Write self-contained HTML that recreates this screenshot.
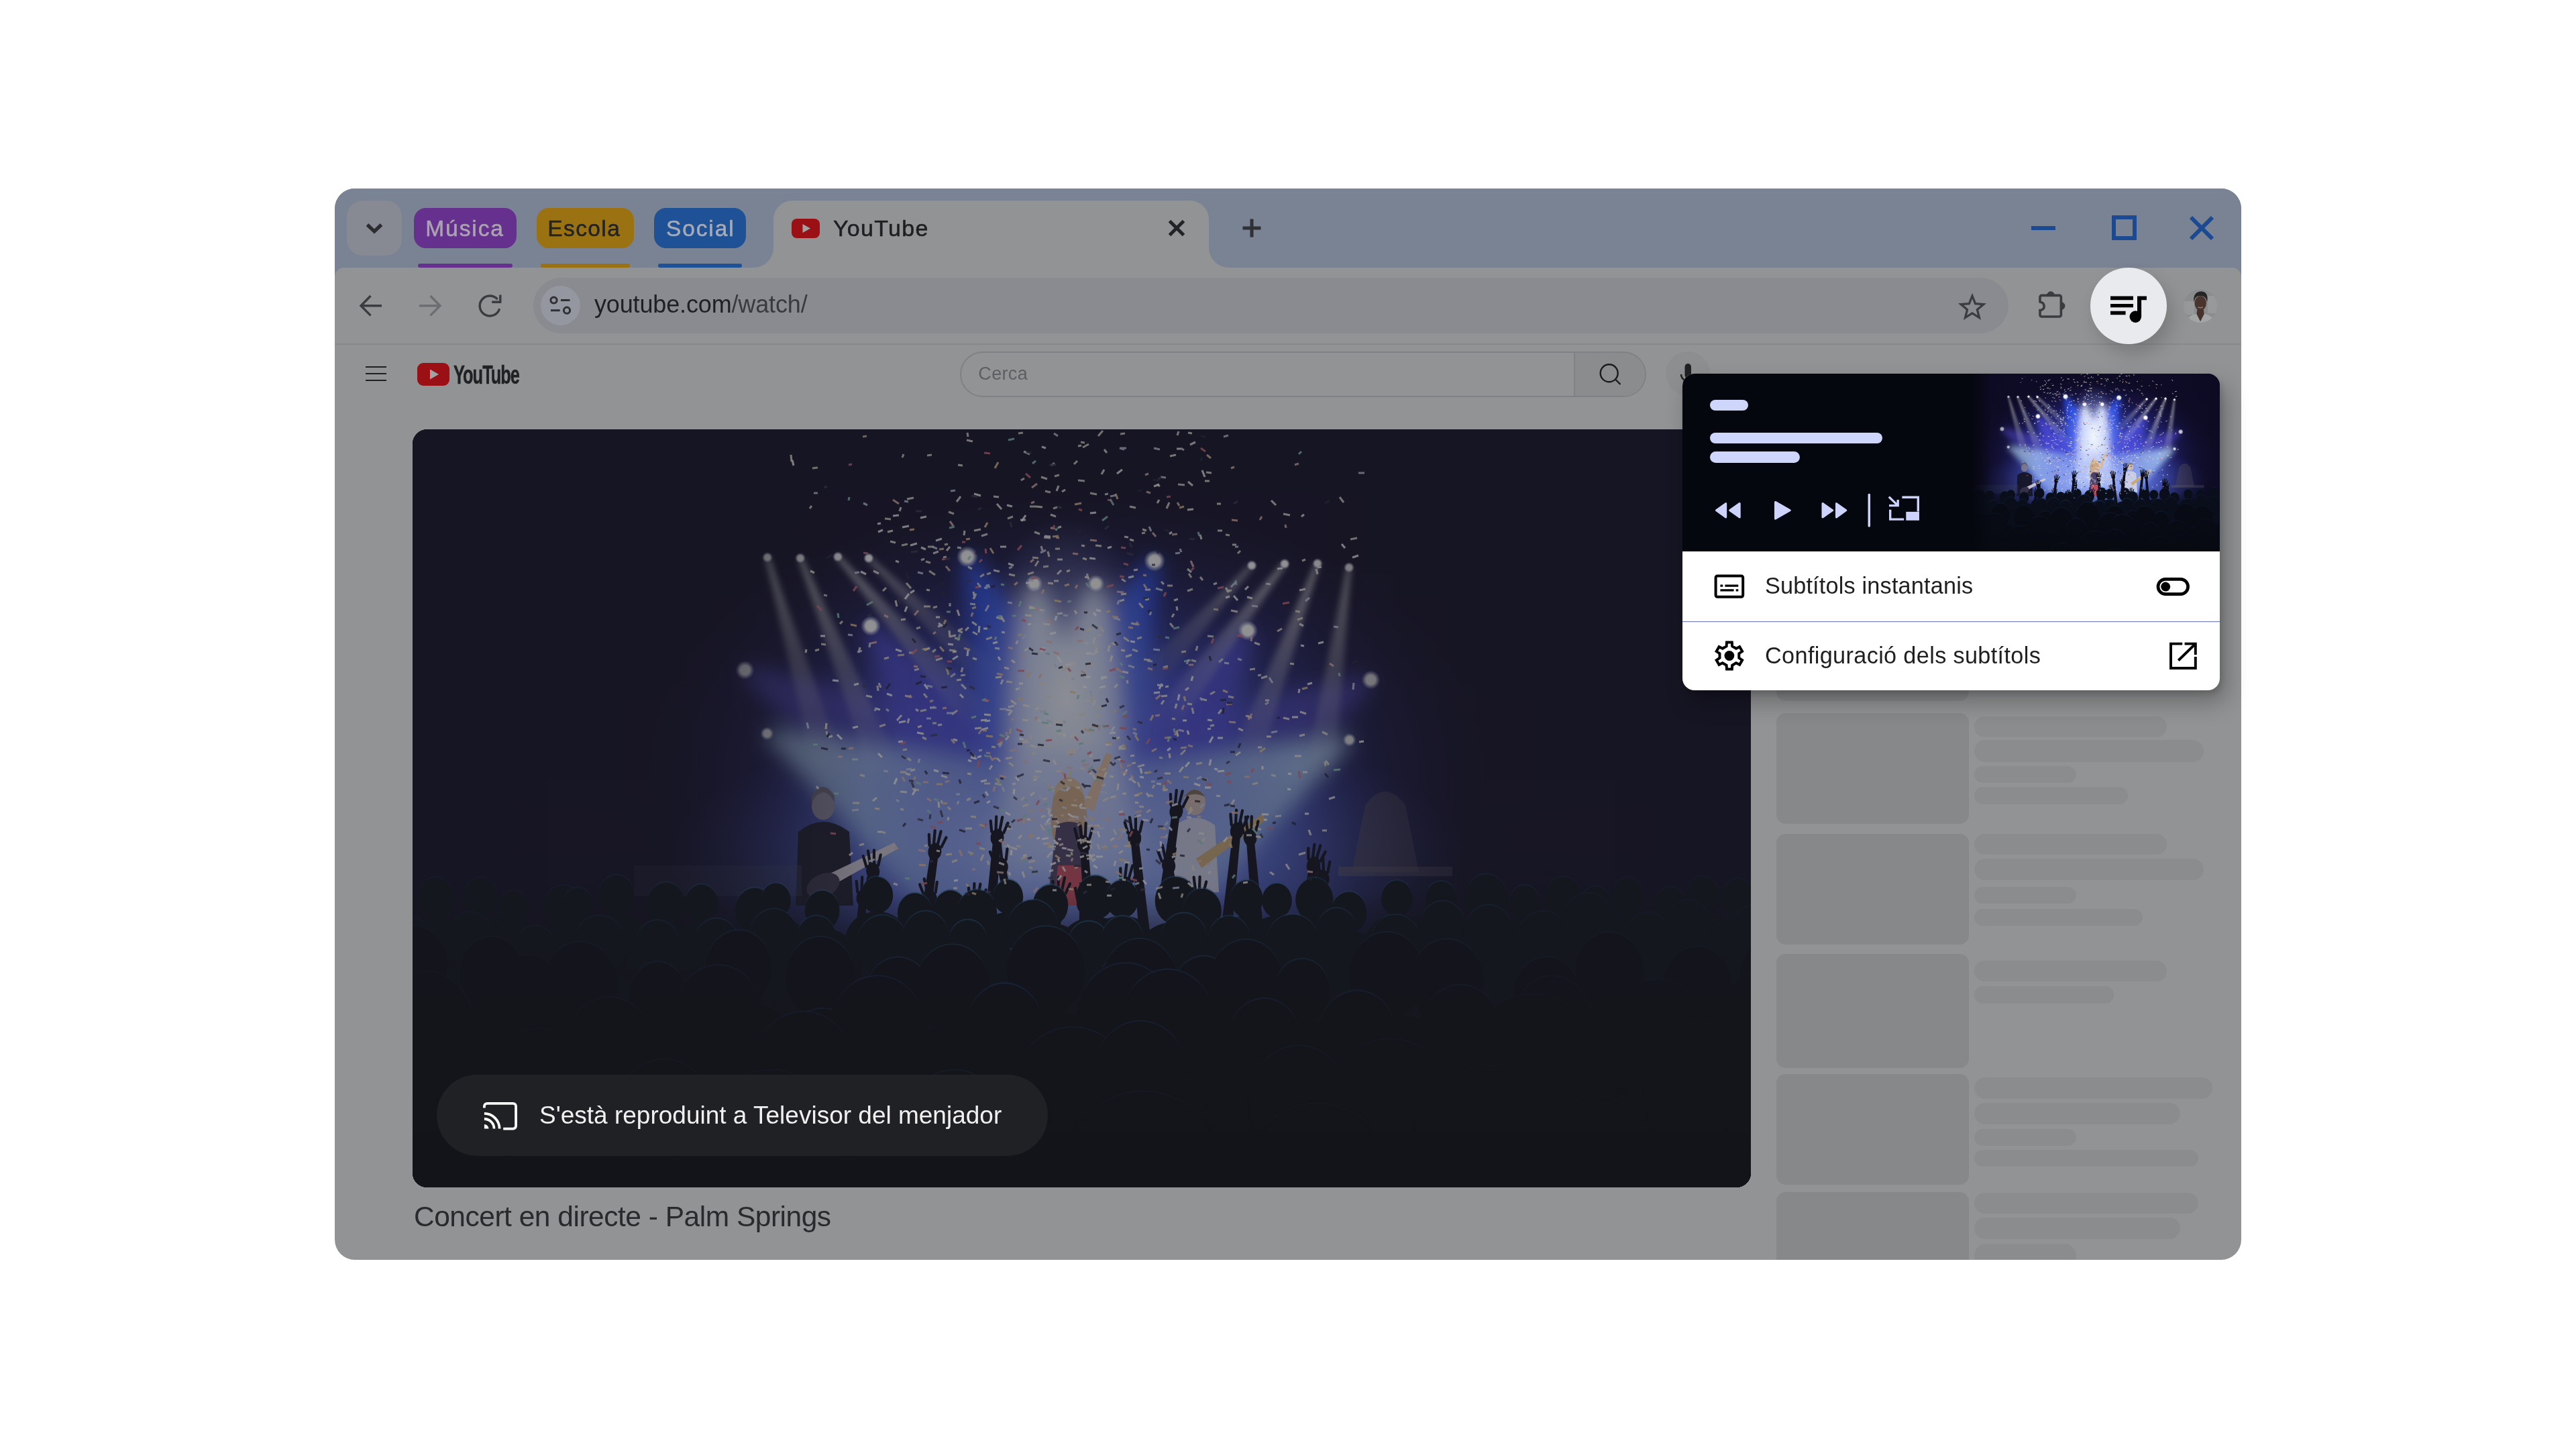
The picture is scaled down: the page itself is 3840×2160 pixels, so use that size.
<!DOCTYPE html>
<html lang="ca"><head><meta charset="utf-8"><title>YouTube</title><style>
*{margin:0;padding:0;box-sizing:border-box}
html,body{width:3840px;height:2160px;background:#fff;overflow:hidden}
body{font-family:"Liberation Sans",sans-serif;position:relative}
.a{position:absolute}
#win{position:absolute;left:499px;top:281px;width:2842px;height:1597px;border-radius:30px;background:#929394;overflow:hidden;will-change:transform}
#wi{position:absolute;left:-499px;top:-281px;width:3840px;height:2160px}
.t{position:absolute;white-space:nowrap;line-height:1}
.m{-webkit-text-stroke:.55px currentColor}
svg{position:absolute;overflow:visible}
.chip{position:absolute;top:310px;height:60px;border-radius:18px}
.ul{position:absolute;top:393px;height:6.4px;border-radius:3.2px}
.sk{position:absolute;background:#87888a;border-radius:14px}
.sp{position:absolute;background:#8b8c8e;border-radius:20px}
</style></head><body>
<svg width="0" height="0" style="position:absolute"><defs><linearGradient id="sbg" x1="0" y1="0" x2="0" y2="1"><stop offset="0" stop-color="#0d0a25"/><stop offset=".55" stop-color="#110e29"/><stop offset=".8" stop-color="#090b16"/><stop offset="1" stop-color="#05070d"/></linearGradient><radialGradient id="sg1" cx="975" cy="520" r="640" gradientUnits="userSpaceOnUse" gradientTransform="translate(975 520) scale(1 .66) translate(-975 -520)"><stop offset="0" stop-color="#5870f0" stop-opacity=".95"/><stop offset=".4" stop-color="#3e50da" stop-opacity=".85"/><stop offset=".72" stop-color="#2a2a92" stop-opacity=".38"/><stop offset="1" stop-color="#1a1850" stop-opacity="0"/></radialGradient><radialGradient id="sg3" cx="975" cy="640" r="600" gradientUnits="userSpaceOnUse" gradientTransform="translate(975 640) scale(1 .36) translate(-975 -640)"><stop offset="0" stop-color="#8aa2f6" stop-opacity=".9"/><stop offset=".5" stop-color="#6680ec" stop-opacity=".6"/><stop offset="1" stop-color="#4050d0" stop-opacity="0"/></radialGradient><linearGradient id="sb1" gradientUnits="userSpaceOnUse" x1="495" y1="359" x2="850" y2="560"><stop offset="0" stop-color="#5248cc" stop-opacity="0.85"/><stop offset="0.45" stop-color="#5248cc" stop-opacity="0.5"/><stop offset="1" stop-color="#5248cc" stop-opacity="0"/></linearGradient><linearGradient id="sb2" gradientUnits="userSpaceOnUse" x1="1428" y1="373" x2="1100" y2="570"><stop offset="0" stop-color="#5248cc" stop-opacity="0.8"/><stop offset="0.45" stop-color="#5248cc" stop-opacity="0.5"/><stop offset="1" stop-color="#5248cc" stop-opacity="0"/></linearGradient><linearGradient id="sb3" gradientUnits="userSpaceOnUse" x1="683" y1="293" x2="925" y2="670"><stop offset="0" stop-color="#4c4ade" stop-opacity="0.9"/><stop offset="0.5" stop-color="#4c4ade" stop-opacity="0.5"/><stop offset="1" stop-color="#4c4ade" stop-opacity="0"/></linearGradient><linearGradient id="sb4" gradientUnits="userSpaceOnUse" x1="1245" y1="300" x2="1015" y2="670"><stop offset="0" stop-color="#4c4ade" stop-opacity="0.9"/><stop offset="0.5" stop-color="#4c4ade" stop-opacity="0.5"/><stop offset="1" stop-color="#4c4ade" stop-opacity="0"/></linearGradient><linearGradient id="sb5" gradientUnits="userSpaceOnUse" x1="827" y1="190" x2="1000" y2="600"><stop offset="0" stop-color="#2a4eee" stop-opacity="1"/><stop offset="0.5" stop-color="#2a4eee" stop-opacity="0.75"/><stop offset="1" stop-color="#2a4eee" stop-opacity="0"/></linearGradient><linearGradient id="sb6" gradientUnits="userSpaceOnUse" x1="1106" y1="196" x2="940" y2="600"><stop offset="0" stop-color="#2a4eee" stop-opacity="1"/><stop offset="0.5" stop-color="#2a4eee" stop-opacity="0.75"/><stop offset="1" stop-color="#2a4eee" stop-opacity="0"/></linearGradient><linearGradient id="sb7" gradientUnits="userSpaceOnUse" x1="528" y1="453" x2="1000" y2="700"><stop offset="0" stop-color="#a6c8f2" stop-opacity="1"/><stop offset="0.42" stop-color="#a6c8f2" stop-opacity="0.6"/><stop offset="1" stop-color="#a6c8f2" stop-opacity="0"/></linearGradient><linearGradient id="sb8" gradientUnits="userSpaceOnUse" x1="1397" y1="463" x2="940" y2="700"><stop offset="0" stop-color="#a6c8f2" stop-opacity="1"/><stop offset="0.42" stop-color="#a6c8f2" stop-opacity="0.6"/><stop offset="1" stop-color="#a6c8f2" stop-opacity="0"/></linearGradient><linearGradient id="sb9" gradientUnits="userSpaceOnUse" x1="926" y1="230" x2="990" y2="690"><stop offset="0" stop-color="#eef5ff" stop-opacity="1"/><stop offset="0.5" stop-color="#eef5ff" stop-opacity="0.7"/><stop offset="1" stop-color="#eef5ff" stop-opacity="0"/></linearGradient><linearGradient id="sb10" gradientUnits="userSpaceOnUse" x1="1019" y1="230" x2="960" y2="690"><stop offset="0" stop-color="#eef5ff" stop-opacity="1"/><stop offset="0.5" stop-color="#eef5ff" stop-opacity="0.7"/><stop offset="1" stop-color="#eef5ff" stop-opacity="0"/></linearGradient><linearGradient id="sb11" gradientUnits="userSpaceOnUse" x1="529" y1="191" x2="625" y2="520"><stop offset="0" stop-color="#dcdce4" stop-opacity="0.7"/><stop offset="0.5" stop-color="#dcdce4" stop-opacity="0.34"/><stop offset="1" stop-color="#dcdce4" stop-opacity="0"/></linearGradient><linearGradient id="sb12" gradientUnits="userSpaceOnUse" x1="578" y1="192" x2="705" y2="510"><stop offset="0" stop-color="#dcdce4" stop-opacity="0.7"/><stop offset="0.5" stop-color="#dcdce4" stop-opacity="0.34"/><stop offset="1" stop-color="#dcdce4" stop-opacity="0"/></linearGradient><linearGradient id="sb13" gradientUnits="userSpaceOnUse" x1="634" y1="190" x2="850" y2="440"><stop offset="0" stop-color="#dcdce4" stop-opacity="0.66"/><stop offset="0.5" stop-color="#dcdce4" stop-opacity="0.3"/><stop offset="1" stop-color="#dcdce4" stop-opacity="0"/></linearGradient><linearGradient id="sb14" gradientUnits="userSpaceOnUse" x1="680" y1="192" x2="860" y2="370"><stop offset="0" stop-color="#dcdce4" stop-opacity="0.5"/><stop offset="0.5" stop-color="#dcdce4" stop-opacity="0.25"/><stop offset="1" stop-color="#dcdce4" stop-opacity="0"/></linearGradient><linearGradient id="sb15" gradientUnits="userSpaceOnUse" x1="1396" y1="206" x2="1350" y2="530"><stop offset="0" stop-color="#dcdce4" stop-opacity="0.66"/><stop offset="0.5" stop-color="#dcdce4" stop-opacity="0.34"/><stop offset="1" stop-color="#dcdce4" stop-opacity="0"/></linearGradient><linearGradient id="sb16" gradientUnits="userSpaceOnUse" x1="1349" y1="200" x2="1235" y2="510"><stop offset="0" stop-color="#dcdce4" stop-opacity="0.7"/><stop offset="0.5" stop-color="#dcdce4" stop-opacity="0.34"/><stop offset="1" stop-color="#dcdce4" stop-opacity="0"/></linearGradient><linearGradient id="sb17" gradientUnits="userSpaceOnUse" x1="1300" y1="200" x2="1110" y2="450"><stop offset="0" stop-color="#dcdce4" stop-opacity="0.7"/><stop offset="0.5" stop-color="#dcdce4" stop-opacity="0.3"/><stop offset="1" stop-color="#dcdce4" stop-opacity="0"/></linearGradient><linearGradient id="sb18" gradientUnits="userSpaceOnUse" x1="1251" y1="203" x2="1090" y2="380"><stop offset="0" stop-color="#dcdce4" stop-opacity="0.5"/><stop offset="0.5" stop-color="#dcdce4" stop-opacity="0.25"/><stop offset="1" stop-color="#dcdce4" stop-opacity="0"/></linearGradient><radialGradient id="sg2" cx="975" cy="400" r="270" gradientUnits="userSpaceOnUse" gradientTransform="translate(975 410) scale(.56 1) translate(-975 -410)"><stop offset="0" stop-color="#f2f7ff" stop-opacity=".85"/><stop offset=".5" stop-color="#ccd8ff" stop-opacity=".42"/><stop offset="1" stop-color="#8090f0" stop-opacity="0"/></radialGradient><radialGradient id="sg4" cx="975" cy="610" r="300" gradientUnits="userSpaceOnUse" gradientTransform="translate(975 610) scale(1 .5) translate(-975 -610)"><stop offset="0" stop-color="#c4d2ff" stop-opacity=".6"/><stop offset=".55" stop-color="#9fb4fa" stop-opacity=".3"/><stop offset="1" stop-color="#8090f0" stop-opacity="0"/></radialGradient><radialGradient id="sl"><stop offset="0" stop-color="#fff"/><stop offset=".5" stop-color="#fff" stop-opacity=".97"/><stop offset="1" stop-color="#cfd8ff" stop-opacity="0"/></radialGradient><linearGradient id="sv" x1="0" y1="0" x2="1" y2="0"><stop offset="0" stop-color="#0c0a22" stop-opacity="1"/><stop offset=".2" stop-color="#0c0a22" stop-opacity=".75"/><stop offset=".34" stop-color="#0c0a22" stop-opacity="0"/><stop offset=".66" stop-color="#0c0a22" stop-opacity="0"/><stop offset=".8" stop-color="#0c0a22" stop-opacity=".75"/><stop offset="1" stop-color="#0c0a22" stop-opacity="1"/></linearGradient><linearGradient id="scr" x1="0" y1="0" x2="0" y2="1"><stop offset="0" stop-color="#080b14" stop-opacity="0"/><stop offset=".3" stop-color="#080b14" stop-opacity=".85"/><stop offset="1" stop-color="#06070c" stop-opacity="1"/></linearGradient><linearGradient id="scr2" x1="0" y1="0" x2="0" y2="1"><stop offset="0" stop-color="#06070c" stop-opacity="0"/><stop offset="1" stop-color="#06070c" stop-opacity=".55"/></linearGradient><filter id="sblur" filterUnits="userSpaceOnUse" x="0" y="0" width="1995" height="1130"><feGaussianBlur stdDeviation="15"/></filter><filter id="sblur2" filterUnits="userSpaceOnUse" x="0" y="0" width="1995" height="1130"><feGaussianBlur stdDeviation="5"/></filter><g id="scene"><rect width="1995" height="1130" fill="url(#sbg)"/><rect width="1995" height="1130" fill="url(#sg1)"/><rect width="1995" height="1130" fill="url(#sg3)"/><g filter="url(#sblur)"><polygon points="491.1,366 785.9,673.1 914.1,446.9 498.9,352" fill="url(#sb1)"/><polygon points="1423.9,366.1 1033.1,458.6 1166.9,681.4 1432.1,379.9" fill="url(#sb2)"/><polygon points="676.3,297.3 798.8,751 1051.2,589 689.7,288.7" fill="url(#sb3)"/><polygon points="1238.2,295.8 887.6,590.8 1142.4,749.2 1251.8,304.2" fill="url(#sb4)"/><polygon points="819.6,193.1 871,654.4 1129,545.6 834.4,186.9" fill="url(#sb5)"/><polygon points="1098.6,193 810.5,546.8 1069.5,653.2 1113.4,199" fill="url(#sb6)"/><polygon points="525.2,458.3 911.9,868.3 1088.1,531.7 530.8,447.7" fill="url(#sb7)"/><polygon points="1394.2,457.7 852.5,531.3 1027.5,868.7 1399.8,468.3" fill="url(#sb8)"/><polygon points="917.1,231.2 866.2,707.2 1113.8,672.8 934.9,228.8" fill="url(#sb9)"/><polygon points="1010.1,228.9 836,674.1 1084,705.9 1027.9,231.1" fill="url(#sb10)"/></g><g filter="url(#sblur2)"><polygon points="525.6,192 602.9,526.4 647.1,513.6 532.4,190" fill="url(#sb11)"/><polygon points="574.7,193.3 683.6,518.5 726.4,501.5 581.3,190.7" fill="url(#sb12)"/><polygon points="631.4,192.3 832.6,455 867.4,425 636.6,187.7" fill="url(#sb13)"/><polygon points="677.5,194.5 845.9,384.2 874.1,355.8 682.5,189.5" fill="url(#sb14)"/><polygon points="1392.5,205.5 1327.2,526.8 1372.8,533.2 1399.5,206.5" fill="url(#sb15)"/><polygon points="1345.7,198.8 1213.4,502.1 1256.6,517.9 1352.3,201.2" fill="url(#sb16)"/><polygon points="1297.2,197.9 1091.7,436.1 1128.3,463.9 1302.8,202.1" fill="url(#sb17)"/><polygon points="1248.4,200.6 1075.2,366.5 1104.8,393.5 1253.6,205.4" fill="url(#sb18)"/></g><rect width="1995" height="1130" fill="url(#sg2)"/><rect width="1995" height="1130" fill="url(#sg4)"/><circle cx="529" cy="191" r="8" fill="url(#sl)"/><circle cx="578" cy="192" r="8" fill="url(#sl)"/><circle cx="634" cy="190" r="8" fill="url(#sl)"/><circle cx="680" cy="192" r="8" fill="url(#sl)"/><circle cx="1251" cy="203" r="8" fill="url(#sl)"/><circle cx="1300" cy="200.5" r="8" fill="url(#sl)"/><circle cx="1349" cy="200" r="8" fill="url(#sl)"/><circle cx="1396" cy="206" r="8" fill="url(#sl)"/><circle cx="827" cy="190" r="16" fill="url(#sl)"/><circle cx="1106" cy="196" r="16" fill="url(#sl)"/><circle cx="926.5" cy="230" r="13" fill="url(#sl)"/><circle cx="1018.5" cy="230" r="13" fill="url(#sl)"/><circle cx="683" cy="293" r="15" fill="url(#sl)"/><circle cx="1245" cy="300" r="15" fill="url(#sl)"/><circle cx="495.5" cy="359" r="14" fill="url(#sl)"/><circle cx="1428.5" cy="373.5" r="14" fill="url(#sl)"/><circle cx="528.5" cy="453.5" r="10" fill="url(#sl)"/><circle cx="1396.5" cy="463" r="10" fill="url(#sl)"/><g><ellipse cx="612" cy="562" rx="17" ry="20" fill="#8b86a0"/><path d="M595 556 q17 -30 34 0 v-10 q-17 -26 -34 0z" fill="#6a6678"/><path d="M575 600 q37 -30 76 0 l6 110 h-86z" fill="#191a2e"/><path d="M610 668 l108 -52 l6 9 l-104 58z" fill="#cfc8d8"/><ellipse cx="612" cy="680" rx="26" ry="17" fill="#3a3550" transform="rotate(-25 612 680)"/><ellipse cx="978" cy="545" rx="22" ry="26" fill="#d6b89a"/><path d="M955 548 q-8 50 4 72 h40 q12 -30 2 -74 q-22 -30 -46 2z" fill="#c9a27a" opacity=".85"/><path d="M960 590 q18 -10 38 0 l10 100 h-60z" fill="#4a3f66"/><path d="M1000 560 l34 -78 l9 4 l-28 84z" fill="#d9b9a0"/><path d="M962 650 h34 l6 60 h-46z" fill="#c24a5c"/><ellipse cx="1166" cy="556" rx="16" ry="19" fill="#c9b7b0"/><path d="M1150 548 q16 -22 32 0 q-16 -8 -32 0z" fill="#7a6858"/><path d="M1138 590 q28 -22 58 0 l6 100 h-70z" fill="#d8d8e6" opacity=".8"/><path d="M1168 640 l98 -66 l6 8 l-96 72z" fill="#c8a878"/><path d="M1420 560 q30 -40 60 0 l20 100 h-100z" fill="#5a5468" opacity=".5"/><rect x="1380" y="652" width="170" height="14" fill="#6a6478" opacity=".5"/></g><rect x="330" y="650" width="250" height="46" fill="#4a5578" opacity=".3"/><rect width="1995" height="1130" fill="url(#sv)" opacity=".75"/><g fill="#0b0d1c"><g transform="rotate(-6 700 790)"><path d="M692 800 L694 668 q6 -9 12 0 L708 800z"/><ellipse cx="700" cy="658" rx="10" ry="13"/><path d="M691 650 l-3 -16 M697 646 l-1 -19 M703 646 l2 -19 M709 650 l5 -15" stroke="#0b0d1c" stroke-width="4.2" stroke-linecap="round"/></g><g transform="rotate(8 760 760)"><path d="M752 770 L754 638 q6 -9 12 0 L768 770z"/><ellipse cx="760" cy="628" rx="10" ry="13"/><path d="M751 620 l-3 -16 M757 616 l-1 -19 M763 616 l2 -19 M769 620 l5 -15" stroke="#0b0d1c" stroke-width="4.2" stroke-linecap="round"/></g><g transform="rotate(-10 795 830)"><path d="M787 840 L789 708 q6 -9 12 0 L803 840z"/><ellipse cx="795" cy="698" rx="10" ry="13"/><path d="M786 690 l-3 -16 M792 686 l-1 -19 M798 686 l2 -19 M804 690 l5 -15" stroke="#0b0d1c" stroke-width="4.2" stroke-linecap="round"/></g><g transform="rotate(5 860 740)"><path d="M852 750 L854 618 q6 -9 12 0 L868 750z"/><ellipse cx="860" cy="608" rx="10" ry="13"/><path d="M851 600 l-3 -16 M857 596 l-1 -19 M863 596 l2 -19 M869 600 l5 -15" stroke="#0b0d1c" stroke-width="4.2" stroke-linecap="round"/></g><g transform="rotate(-12 905 780)"><path d="M897 790 L899 658 q6 -9 12 0 L913 790z"/><ellipse cx="905" cy="648" rx="10" ry="13"/><path d="M896 640 l-3 -16 M902 636 l-1 -19 M908 636 l2 -19 M914 640 l5 -15" stroke="#0b0d1c" stroke-width="4.2" stroke-linecap="round"/></g><g transform="rotate(6 950 830)"><path d="M942 840 L944 708 q6 -9 12 0 L958 840z"/><ellipse cx="950" cy="698" rx="10" ry="13"/><path d="M941 690 l-3 -16 M947 686 l-1 -19 M953 686 l2 -19 M959 690 l5 -15" stroke="#0b0d1c" stroke-width="4.2" stroke-linecap="round"/></g><g transform="rotate(-4 1010 750)"><path d="M1002 760 L1004 628 q6 -9 12 0 L1018 760z"/><ellipse cx="1010" cy="618" rx="10" ry="13"/><path d="M1001 610 l-3 -16 M1007 606 l-1 -19 M1013 606 l2 -19 M1019 610 l5 -15" stroke="#0b0d1c" stroke-width="4.2" stroke-linecap="round"/></g><g transform="rotate(10 1040 810)"><path d="M1032 820 L1034 688 q6 -9 12 0 L1048 820z"/><ellipse cx="1040" cy="678" rx="10" ry="13"/><path d="M1031 670 l-3 -16 M1037 666 l-1 -19 M1043 666 l2 -19 M1049 670 l5 -15" stroke="#0b0d1c" stroke-width="4.2" stroke-linecap="round"/></g><g transform="rotate(-6 1090 740)"><path d="M1082 750 L1084 618 q6 -9 12 0 L1098 750z"/><ellipse cx="1090" cy="608" rx="10" ry="13"/><path d="M1081 600 l-3 -16 M1087 596 l-1 -19 M1093 596 l2 -19 M1099 600 l5 -15" stroke="#0b0d1c" stroke-width="4.2" stroke-linecap="round"/></g><g transform="rotate(8 1120 700)"><path d="M1112 710 L1114 578 q6 -9 12 0 L1128 710z"/><ellipse cx="1120" cy="568" rx="10" ry="13"/><path d="M1111 560 l-3 -16 M1117 556 l-1 -19 M1123 556 l2 -19 M1129 560 l5 -15" stroke="#0b0d1c" stroke-width="4.2" stroke-linecap="round"/></g><g transform="rotate(-10 1150 780)"><path d="M1142 790 L1144 658 q6 -9 12 0 L1158 790z"/><ellipse cx="1150" cy="648" rx="10" ry="13"/><path d="M1141 640 l-3 -16 M1147 636 l-1 -19 M1153 636 l2 -19 M1159 640 l5 -15" stroke="#0b0d1c" stroke-width="4.2" stroke-linecap="round"/></g><g transform="rotate(6 1215 730)"><path d="M1207 740 L1209 608 q6 -9 12 0 L1223 740z"/><ellipse cx="1215" cy="598" rx="10" ry="13"/><path d="M1206 590 l-3 -16 M1212 586 l-1 -19 M1218 586 l2 -19 M1224 590 l5 -15" stroke="#0b0d1c" stroke-width="4.2" stroke-linecap="round"/></g><g transform="rotate(-5 1260 740)"><path d="M1252 750 L1254 618 q6 -9 12 0 L1268 750z"/><ellipse cx="1260" cy="608" rx="10" ry="13"/><path d="M1251 600 l-3 -16 M1257 596 l-1 -19 M1263 596 l2 -19 M1269 600 l5 -15" stroke="#0b0d1c" stroke-width="4.2" stroke-linecap="round"/></g><g transform="rotate(10 1320 780)"><path d="M1312 790 L1314 658 q6 -9 12 0 L1328 790z"/><ellipse cx="1320" cy="648" rx="10" ry="13"/><path d="M1311 640 l-3 -16 M1317 636 l-1 -19 M1323 636 l2 -19 M1329 640 l5 -15" stroke="#0b0d1c" stroke-width="4.2" stroke-linecap="round"/></g><g transform="rotate(-8 1375 800)"><path d="M1367 810 L1369 678 q6 -9 12 0 L1383 810z"/><ellipse cx="1375" cy="668" rx="10" ry="13"/><path d="M1366 660 l-3 -16 M1372 656 l-1 -19 M1378 656 l2 -19 M1384 660 l5 -15" stroke="#0b0d1c" stroke-width="4.2" stroke-linecap="round"/></g><g transform="rotate(0 1000 840)"><path d="M992 850 L994 718 q6 -9 12 0 L1008 850z"/><ellipse cx="1000" cy="708" rx="10" ry="13"/><path d="M991 700 l-3 -16 M997 696 l-1 -19 M1003 696 l2 -19 M1009 700 l5 -15" stroke="#0b0d1c" stroke-width="4.2" stroke-linecap="round"/></g><g transform="rotate(4 830 840)"><path d="M822 850 L824 718 q6 -9 12 0 L838 850z"/><ellipse cx="830" cy="708" rx="10" ry="13"/><path d="M821 700 l-3 -16 M827 696 l-1 -19 M833 696 l2 -19 M839 700 l5 -15" stroke="#0b0d1c" stroke-width="4.2" stroke-linecap="round"/></g><g transform="rotate(5 660 830)"><path d="M652 840 L654 708 q6 -9 12 0 L668 840z"/><ellipse cx="660" cy="698" rx="10" ry="13"/><path d="M651 690 l-3 -16 M657 686 l-1 -19 M663 686 l2 -19 M669 690 l5 -15" stroke="#0b0d1c" stroke-width="4.2" stroke-linecap="round"/></g><g transform="rotate(-4 1180 830)"><path d="M1172 840 L1174 708 q6 -9 12 0 L1188 840z"/><ellipse cx="1180" cy="698" rx="10" ry="13"/><path d="M1171 690 l-3 -16 M1177 686 l-1 -19 M1183 686 l2 -19 M1189 690 l5 -15" stroke="#0b0d1c" stroke-width="4.2" stroke-linecap="round"/></g></g><rect x="0" y="690" width="1995" height="440" fill="url(#scr)"/><g><ellipse cx="-24.5" cy="716.6" rx="26.1" ry="29.8" fill="#1f5f8f" opacity="0.10"/><ellipse cx="-24.5" cy="719.5" rx="26.6" ry="30.6" fill="#0a0e1a"/><path d="M-80.4 810 q2.7 -61.2 55.9 -63.9 q53.3 2.7 55.9 63.9z" fill="#0a0e1a"/><ellipse cx="34.5" cy="696.6" rx="26.6" ry="30.4" fill="#1f5f8f" opacity="0.10"/><ellipse cx="34.5" cy="699.5" rx="27.1" ry="31.2" fill="#0a0e1a"/><path d="M-22.5 791.7 q2.7 -62.4 57 -65.1 q54.3 2.7 57 65.1z" fill="#0a0e1a"/><ellipse cx="101.5" cy="694.2" rx="24.4" ry="27.9" fill="#1f5f8f" opacity="0.10"/><ellipse cx="101.5" cy="697" rx="24.9" ry="28.6" fill="#0a0e1a"/><path d="M49.2 781.6 q2.5 -57.2 52.2 -59.7 q49.8 2.5 52.2 59.7z" fill="#0a0e1a"/><ellipse cx="150.4" cy="710.3" rx="21.6" ry="24.7" fill="#1f5f8f" opacity="0.10"/><ellipse cx="150.4" cy="713.2" rx="22.1" ry="25.4" fill="#0a0e1a"/><path d="M104.1 788.2 q2.2 -50.7 46.3 -52.9 q44.1 2.2 46.3 52.9z" fill="#0a0e1a"/><ellipse cx="224.1" cy="709.3" rx="27.7" ry="31.6" fill="#1f5f8f" opacity="0.14"/><ellipse cx="224.1" cy="712.2" rx="28.2" ry="32.5" fill="#0a0e1a"/><path d="M164.8 808.2 q2.8 -65 59.3 -67.8 q56.5 2.8 59.3 67.8z" fill="#0a0e1a"/><ellipse cx="246.6" cy="705.9" rx="21.8" ry="24.9" fill="#1f5f8f" opacity="0.16"/><ellipse cx="246.6" cy="708.8" rx="22.2" ry="25.6" fill="#0a0e1a"/><path d="M199.9 784.4 q2.2 -51.2 46.7 -53.4 q44.5 2.2 46.7 53.4z" fill="#0a0e1a"/><ellipse cx="304" cy="692.4" rx="26.1" ry="29.8" fill="#1f5f8f" opacity="0.19"/><ellipse cx="304" cy="695.3" rx="26.6" ry="30.6" fill="#0a0e1a"/><path d="M248.1 785.8 q2.7 -61.2 55.9 -63.9 q53.2 2.7 55.9 63.9z" fill="#0a0e1a"/><ellipse cx="378.1" cy="705.6" rx="27.9" ry="31.9" fill="#1f5f8f" opacity="0.24"/><ellipse cx="378.1" cy="708.5" rx="28.5" ry="32.8" fill="#0a0e1a"/><path d="M318.2 805.5 q2.9 -65.6 59.9 -68.4 q57 2.9 59.9 68.4z" fill="#0a0e1a"/><ellipse cx="430.8" cy="704" rx="24.1" ry="27.6" fill="#1f5f8f" opacity="0.27"/><ellipse cx="430.8" cy="706.8" rx="24.6" ry="28.3" fill="#0a0e1a"/><path d="M379.2 790.5 q2.5 -56.6 51.7 -59 q49.2 2.5 51.7 59z" fill="#0a0e1a"/><ellipse cx="510.1" cy="714.3" rx="28.7" ry="32.8" fill="#1f5f8f" opacity="0.32"/><ellipse cx="510.1" cy="717.2" rx="29.2" ry="33.6" fill="#0a0e1a"/><path d="M448.6 816.6 q2.9 -67.3 61.4 -70.2 q58.5 2.9 61.4 70.2z" fill="#0a0e1a"/><ellipse cx="541.5" cy="699.4" rx="21.9" ry="25" fill="#1f5f8f" opacity="0.34"/><ellipse cx="541.5" cy="702.3" rx="22.4" ry="25.7" fill="#0a0e1a"/><path d="M494.6 778.3 q2.2 -51.4 47 -53.7 q44.7 2.2 47 53.7z" fill="#0a0e1a"/><ellipse cx="610.7" cy="714.5" rx="25.3" ry="28.9" fill="#1f5f8f" opacity="0.38"/><ellipse cx="610.7" cy="717.4" rx="25.8" ry="29.6" fill="#0a0e1a"/><path d="M556.6 805 q2.6 -59.3 54.1 -61.9 q51.5 2.6 54.1 61.9z" fill="#0a0e1a"/><ellipse cx="692.3" cy="691.6" rx="23.4" ry="26.7" fill="#1f5f8f" opacity="0.43"/><ellipse cx="692.3" cy="694.5" rx="23.9" ry="27.4" fill="#0a0e1a"/><path d="M642.1 775.7 q2.4 -54.9 50.1 -57.3 q47.7 2.4 50.1 57.3z" fill="#0a0e1a"/><ellipse cx="748.8" cy="718.1" rx="25.4" ry="29" fill="#1f5f8f" opacity="0.46"/><ellipse cx="748.8" cy="721" rx="25.9" ry="29.8" fill="#0a0e1a"/><path d="M694.5 809 q2.6 -59.6 54.4 -62.1 q51.8 2.6 54.4 62.1z" fill="#0a0e1a"/><ellipse cx="801.6" cy="712.6" rx="24" ry="27.5" fill="#1f5f8f" opacity="0.49"/><ellipse cx="801.6" cy="715.5" rx="24.5" ry="28.2" fill="#0a0e1a"/><path d="M750.1 798.9 q2.5 -56.4 51.5 -58.8 q49 2.5 51.5 58.8z" fill="#0a0e1a"/><ellipse cx="841.4" cy="717.7" rx="29.2" ry="33.4" fill="#1f5f8f" opacity="0.52"/><ellipse cx="841.4" cy="720.5" rx="29.8" ry="34.3" fill="#0a0e1a"/><path d="M778.8 821.8 q3 -68.5 62.6 -71.5 q59.6 3 62.6 71.5z" fill="#0a0e1a"/><ellipse cx="888" cy="694.4" rx="21.8" ry="24.9" fill="#1f5f8f" opacity="0.55"/><ellipse cx="888" cy="697.2" rx="22.2" ry="25.6" fill="#0a0e1a"/><path d="M841.3 772.9 q2.2 -51.2 46.7 -53.4 q44.5 2.2 46.7 53.4z" fill="#0a0e1a"/><ellipse cx="950.9" cy="706.7" rx="25.9" ry="29.6" fill="#1f5f8f" opacity="0.59"/><ellipse cx="950.9" cy="709.6" rx="26.4" ry="30.4" fill="#0a0e1a"/><path d="M895.4 799.5 q2.6 -60.8 55.5 -63.4 q52.9 2.6 55.5 63.4z" fill="#0a0e1a"/><ellipse cx="1017.8" cy="695.2" rx="28" ry="32" fill="#1f5f8f" opacity="0.57"/><ellipse cx="1017.8" cy="698" rx="28.6" ry="32.8" fill="#0a0e1a"/><path d="M957.8 795.1 q2.9 -65.7 60 -68.5 q57.1 2.9 60 68.5z" fill="#0a0e1a"/><ellipse cx="1057.9" cy="697.4" rx="24" ry="27.5" fill="#1f5f8f" opacity="0.55"/><ellipse cx="1057.9" cy="700.2" rx="24.5" ry="28.2" fill="#0a0e1a"/><path d="M1006.4 783.6 q2.5 -56.4 51.5 -58.8 q49 2.5 51.5 58.8z" fill="#0a0e1a"/><ellipse cx="1137.9" cy="699.8" rx="30.5" ry="34.9" fill="#1f5f8f" opacity="0.50"/><ellipse cx="1137.9" cy="702.7" rx="31.2" ry="35.8" fill="#0a0e1a"/><path d="M1072.5 808.6 q3.1 -71.7 65.4 -74.8 q62.3 3.1 65.4 74.8z" fill="#0a0e1a"/><ellipse cx="1177.3" cy="714.7" rx="28" ry="32" fill="#1f5f8f" opacity="0.48"/><ellipse cx="1177.3" cy="717.6" rx="28.5" ry="32.8" fill="#0a0e1a"/><path d="M1117.4 814.6 q2.9 -65.6 59.9 -68.5 q57.1 2.9 59.9 68.5z" fill="#0a0e1a"/><ellipse cx="1243.3" cy="697.4" rx="23.9" ry="27.3" fill="#1f5f8f" opacity="0.44"/><ellipse cx="1243.3" cy="700.3" rx="24.4" ry="28" fill="#0a0e1a"/><path d="M1192.1 783.2 q2.4 -56.1 51.2 -58.5 q48.8 2.4 51.2 58.5z" fill="#0a0e1a"/><ellipse cx="1288.5" cy="699.6" rx="21.9" ry="25.1" fill="#1f5f8f" opacity="0.41"/><ellipse cx="1288.5" cy="702.5" rx="22.4" ry="25.8" fill="#0a0e1a"/><path d="M1241.5 778.6 q2.2 -51.5 47 -53.7 q44.8 2.2 47 53.7z" fill="#0a0e1a"/><ellipse cx="1344.3" cy="698.2" rx="27.5" ry="31.5" fill="#1f5f8f" opacity="0.37"/><ellipse cx="1344.3" cy="701.1" rx="28.1" ry="32.3" fill="#0a0e1a"/><path d="M1285.3 796.6 q2.8 -64.6 59 -67.4 q56.2 2.8 59 67.4z" fill="#0a0e1a"/><ellipse cx="1395.6" cy="717.5" rx="26.3" ry="30" fill="#1f5f8f" opacity="0.34"/><ellipse cx="1395.6" cy="720.4" rx="26.8" ry="30.8" fill="#0a0e1a"/><path d="M1339.3 811.6 q2.7 -61.7 56.3 -64.4 q53.6 2.7 56.3 64.4z" fill="#0a0e1a"/><ellipse cx="1467.3" cy="696.6" rx="22.8" ry="26.1" fill="#1f5f8f" opacity="0.30"/><ellipse cx="1467.3" cy="699.4" rx="23.3" ry="26.8" fill="#0a0e1a"/><path d="M1418.5 778.5 q2.3 -53.5 48.9 -55.8 q46.5 2.3 48.9 55.8z" fill="#0a0e1a"/><ellipse cx="1533.4" cy="698.4" rx="23.2" ry="26.5" fill="#1f5f8f" opacity="0.26"/><ellipse cx="1533.4" cy="701.2" rx="23.6" ry="27.2" fill="#0a0e1a"/><path d="M1483.7 781.6 q2.4 -54.4 49.7 -56.8 q47.3 2.4 49.7 56.8z" fill="#0a0e1a"/><ellipse cx="1600.5" cy="696.9" rx="31.2" ry="35.7" fill="#1f5f8f" opacity="0.22"/><ellipse cx="1600.5" cy="699.8" rx="31.9" ry="36.6" fill="#0a0e1a"/><path d="M1533.6 808.1 q3.2 -73.3 66.9 -76.5 q63.7 3.2 66.9 76.5z" fill="#0a0e1a"/><ellipse cx="1657.6" cy="703" rx="22.3" ry="25.4" fill="#1f5f8f" opacity="0.18"/><ellipse cx="1657.6" cy="705.9" rx="22.7" ry="26.1" fill="#0a0e1a"/><path d="M1609.9 783.1 q2.3 -52.3 47.7 -54.5 q45.4 2.3 47.7 54.5z" fill="#0a0e1a"/><ellipse cx="1715.3" cy="698.1" rx="28.6" ry="32.7" fill="#1f5f8f" opacity="0.15"/><ellipse cx="1715.3" cy="700.9" rx="29.2" ry="33.6" fill="#0a0e1a"/><path d="M1654 800.2 q2.9 -67.2 61.3 -70.1 q58.4 2.9 61.3 70.1z" fill="#0a0e1a"/><ellipse cx="1763.6" cy="707.7" rx="24.3" ry="27.7" fill="#1f5f8f" opacity="0.12"/><ellipse cx="1763.6" cy="710.6" rx="24.8" ry="28.5" fill="#0a0e1a"/><path d="M1711.6 794.8 q2.5 -57 52 -59.4 q49.5 2.5 52 59.4z" fill="#0a0e1a"/><ellipse cx="1811.1" cy="693.5" rx="23.6" ry="27" fill="#1f5f8f" opacity="0.10"/><ellipse cx="1811.1" cy="696.4" rx="24.1" ry="27.7" fill="#0a0e1a"/><path d="M1760.6 778.2 q2.4 -55.4 50.5 -57.8 q48.1 2.4 50.5 57.8z" fill="#0a0e1a"/><ellipse cx="1874.3" cy="708.2" rx="24.1" ry="27.6" fill="#1f5f8f" opacity="0.10"/><ellipse cx="1874.3" cy="711.1" rx="24.6" ry="28.3" fill="#0a0e1a"/><path d="M1822.6 794.8 q2.5 -56.6 51.7 -59.1 q49.3 2.5 51.7 59.1z" fill="#0a0e1a"/><ellipse cx="1923.2" cy="692.1" rx="24" ry="27.4" fill="#1f5f8f" opacity="0.10"/><ellipse cx="1923.2" cy="694.9" rx="24.5" ry="28.2" fill="#0a0e1a"/><path d="M1871.7 778.3 q2.5 -56.4 51.5 -58.8 q49 2.5 51.5 58.8z" fill="#0a0e1a"/><ellipse cx="1975.8" cy="696.4" rx="25.1" ry="28.7" fill="#1f5f8f" opacity="0.10"/><ellipse cx="1975.8" cy="699.3" rx="25.6" ry="29.4" fill="#0a0e1a"/><path d="M1922.1 786.2 q2.6 -58.8 53.7 -61.4 q51.2 2.6 53.7 61.4z" fill="#0a0e1a"/><ellipse cx="2037.5" cy="701.4" rx="30.6" ry="35" fill="#1f5f8f" opacity="0.10"/><ellipse cx="2037.5" cy="704.3" rx="31.2" ry="35.9" fill="#0a0e1a"/><path d="M1971.9 810.4 q3.1 -71.8 65.6 -74.9 q62.4 3.1 65.6 74.9z" fill="#0a0e1a"/><ellipse cx="-43.8" cy="755.9" rx="30.2" ry="34.5" fill="#1f5f8f" opacity="0.10"/><ellipse cx="-43.8" cy="759" rx="30.8" ry="35.4" fill="#0a0e1a"/><path d="M-108.5 863.8 q3.1 -70.9 64.7 -74 q61.6 3.1 64.7 74z" fill="#0a0e1a"/><ellipse cx="-6.5" cy="767.7" rx="38.1" ry="43.6" fill="#1f5f8f" opacity="0.10"/><ellipse cx="-6.5" cy="770.8" rx="38.9" ry="44.7" fill="#0a0e1a"/><path d="M-88.2 903 q3.9 -89.5 81.7 -93.3 q77.8 3.9 81.7 93.3z" fill="#0a0e1a"/><ellipse cx="86" cy="757.8" rx="35" ry="40" fill="#1f5f8f" opacity="0.10"/><ellipse cx="86" cy="760.9" rx="35.7" ry="41.1" fill="#0a0e1a"/><path d="M11 882.4 q3.6 -82.2 75.1 -85.8 q71.5 3.6 75.1 85.8z" fill="#0a0e1a"/><ellipse cx="182.8" cy="770.9" rx="29.3" ry="33.5" fill="#1f5f8f" opacity="0.12"/><ellipse cx="182.8" cy="774" rx="29.9" ry="34.4" fill="#0a0e1a"/><path d="M120.1 875.6 q3 -68.7 62.8 -71.7 q59.8 3 62.8 71.7z" fill="#0a0e1a"/><ellipse cx="278.6" cy="767.3" rx="38.6" ry="44.1" fill="#1f5f8f" opacity="0.18"/><ellipse cx="278.6" cy="770.4" rx="39.4" ry="45.3" fill="#0a0e1a"/><path d="M195.8 904.4 q3.9 -90.7 82.8 -94.6 q78.8 3.9 82.8 94.6z" fill="#0a0e1a"/><ellipse cx="365.1" cy="767.8" rx="33.2" ry="37.9" fill="#1f5f8f" opacity="0.23"/><ellipse cx="365.1" cy="770.9" rx="33.9" ry="38.9" fill="#0a0e1a"/><path d="M294 886.1 q3.4 -77.9 71.1 -81.3 q67.7 3.4 71.1 81.3z" fill="#0a0e1a"/><ellipse cx="453.1" cy="766.3" rx="34.1" ry="39" fill="#1f5f8f" opacity="0.28"/><ellipse cx="453.1" cy="769.4" rx="34.8" ry="40" fill="#0a0e1a"/><path d="M380 887.7 q3.5 -80.1 73.1 -83.5 q69.6 3.5 73.1 83.5z" fill="#0a0e1a"/><ellipse cx="538.7" cy="755.5" rx="37" ry="42.3" fill="#1f5f8f" opacity="0.33"/><ellipse cx="538.7" cy="758.6" rx="37.8" ry="43.5" fill="#0a0e1a"/><path d="M459.3 887.1 q3.8 -86.9 79.4 -90.7 q75.6 3.8 79.4 90.7z" fill="#0a0e1a"/><ellipse cx="602.1" cy="756.8" rx="29.4" ry="33.5" fill="#1f5f8f" opacity="0.37"/><ellipse cx="602.1" cy="759.9" rx="30" ry="34.4" fill="#0a0e1a"/><path d="M539.2 861.8 q3 -68.9 62.9 -71.9 q59.9 3 62.9 71.9z" fill="#0a0e1a"/><ellipse cx="700.4" cy="766.6" rx="38.5" ry="44" fill="#1f5f8f" opacity="0.43"/><ellipse cx="700.4" cy="769.7" rx="39.3" ry="45.2" fill="#0a0e1a"/><path d="M617.9 903.2 q3.9 -90.4 82.5 -94.3 q78.6 3.9 82.5 94.3z" fill="#0a0e1a"/><ellipse cx="764.9" cy="755.8" rx="34.4" ry="39.4" fill="#1f5f8f" opacity="0.47"/><ellipse cx="764.9" cy="758.9" rx="35.1" ry="40.4" fill="#0a0e1a"/><path d="M691.1 878.4 q3.5 -80.8 73.8 -84.3 q70.3 3.5 73.8 84.3z" fill="#0a0e1a"/><ellipse cx="828" cy="761.9" rx="28.6" ry="32.7" fill="#1f5f8f" opacity="0.51"/><ellipse cx="828" cy="765" rx="29.2" ry="33.6" fill="#0a0e1a"/><path d="M766.7 864.4 q2.9 -67.2 61.4 -70.1 q58.5 2.9 61.4 70.1z" fill="#0a0e1a"/><ellipse cx="924.7" cy="743.2" rx="38.1" ry="43.5" fill="#1f5f8f" opacity="0.57"/><ellipse cx="924.7" cy="746.3" rx="38.9" ry="44.7" fill="#0a0e1a"/><path d="M843.1 878.4 q3.9 -89.4 81.6 -93.3 q77.7 3.9 81.6 93.3z" fill="#0a0e1a"/><ellipse cx="1007.8" cy="768" rx="31.8" ry="36.4" fill="#1f5f8f" opacity="0.58"/><ellipse cx="1007.8" cy="771.1" rx="32.5" ry="37.4" fill="#0a0e1a"/><path d="M939.6 881.6 q3.2 -74.7 68.2 -78 q65 3.2 68.2 78z" fill="#0a0e1a"/><ellipse cx="1058.3" cy="759.3" rx="31.1" ry="35.5" fill="#1f5f8f" opacity="0.55"/><ellipse cx="1058.3" cy="762.4" rx="31.7" ry="36.5" fill="#0a0e1a"/><path d="M991.7 870.3 q3.2 -72.9 66.6 -76.1 q63.4 3.2 66.6 76.1z" fill="#0a0e1a"/><ellipse cx="1149.6" cy="758.7" rx="34.5" ry="39.4" fill="#1f5f8f" opacity="0.49"/><ellipse cx="1149.6" cy="761.8" rx="35.2" ry="40.4" fill="#0a0e1a"/><path d="M1075.8 881.3 q3.5 -80.9 73.8 -84.4 q70.3 3.5 73.8 84.4z" fill="#0a0e1a"/><ellipse cx="1217.3" cy="758.9" rx="31" ry="35.5" fill="#1f5f8f" opacity="0.45"/><ellipse cx="1217.3" cy="762" rx="31.7" ry="36.4" fill="#0a0e1a"/><path d="M1150.8 869.6 q3.2 -72.8 66.5 -76 q63.3 3.2 66.5 76z" fill="#0a0e1a"/><ellipse cx="1311.8" cy="767.8" rx="40.6" ry="46.5" fill="#1f5f8f" opacity="0.39"/><ellipse cx="1311.8" cy="770.9" rx="41.5" ry="47.7" fill="#0a0e1a"/><path d="M1224.7 911.9 q4.1 -95.4 87.1 -99.5 q83 4.1 87.1 99.5z" fill="#0a0e1a"/><ellipse cx="1377.5" cy="746.3" rx="30.1" ry="34.5" fill="#1f5f8f" opacity="0.35"/><ellipse cx="1377.5" cy="749.4" rx="30.8" ry="35.4" fill="#0a0e1a"/><path d="M1312.9 854 q3.1 -70.8 64.6 -73.8 q61.5 3.1 64.6 73.8z" fill="#0a0e1a"/><ellipse cx="1465.3" cy="765.5" rx="38.3" ry="43.7" fill="#1f5f8f" opacity="0.30"/><ellipse cx="1465.3" cy="768.6" rx="39" ry="44.9" fill="#0a0e1a"/><path d="M1383.3 901.3 q3.9 -89.8 82 -93.7 q78.1 3.9 82 93.7z" fill="#0a0e1a"/><ellipse cx="1535.5" cy="741" rx="34.6" ry="39.5" fill="#1f5f8f" opacity="0.26"/><ellipse cx="1535.5" cy="744.1" rx="35.3" ry="40.6" fill="#0a0e1a"/><path d="M1461.4 864.1 q3.5 -81.2 74.1 -84.7 q70.6 3.5 74.1 84.7z" fill="#0a0e1a"/><ellipse cx="1604" cy="749.8" rx="37.1" ry="42.3" fill="#1f5f8f" opacity="0.22"/><ellipse cx="1604" cy="752.9" rx="37.8" ry="43.5" fill="#0a0e1a"/><path d="M1524.6 881.5 q3.8 -87 79.4 -90.7 q75.6 3.8 79.4 90.7z" fill="#0a0e1a"/><ellipse cx="1685.8" cy="765.1" rx="42.1" ry="48.1" fill="#1f5f8f" opacity="0.17"/><ellipse cx="1685.8" cy="768.2" rx="42.9" ry="49.4" fill="#0a0e1a"/><path d="M1595.6 914.2 q4.3 -98.8 90.2 -103.1 q85.9 4.3 90.2 103.1z" fill="#0a0e1a"/><ellipse cx="1752.9" cy="736" rx="40.5" ry="46.3" fill="#1f5f8f" opacity="0.13"/><ellipse cx="1752.9" cy="739.1" rx="41.4" ry="47.6" fill="#0a0e1a"/><path d="M1666 879.8 q4.1 -95.1 86.9 -99.3 q82.7 4.1 86.9 99.3z" fill="#0a0e1a"/><ellipse cx="1841.3" cy="755.4" rx="32.6" ry="37.2" fill="#1f5f8f" opacity="0.10"/><ellipse cx="1841.3" cy="758.5" rx="33.3" ry="38.2" fill="#0a0e1a"/><path d="M1771.5 871.6 q3.3 -76.5 69.8 -79.8 q66.5 3.3 69.8 79.8z" fill="#0a0e1a"/><ellipse cx="1901.5" cy="739.8" rx="34.6" ry="39.6" fill="#1f5f8f" opacity="0.10"/><ellipse cx="1901.5" cy="742.9" rx="35.3" ry="40.7" fill="#0a0e1a"/><path d="M1827.3 863.1 q3.5 -81.3 74.2 -84.8 q70.7 3.5 74.2 84.8z" fill="#0a0e1a"/><ellipse cx="1996.3" cy="743.4" rx="30.2" ry="34.5" fill="#1f5f8f" opacity="0.10"/><ellipse cx="1996.3" cy="746.5" rx="30.8" ry="35.5" fill="#0a0e1a"/><path d="M1931.6 851.4 q3.1 -70.9 64.7 -74 q61.7 3.1 64.7 74z" fill="#0a0e1a"/><ellipse cx="2052.4" cy="751" rx="37.1" ry="42.4" fill="#1f5f8f" opacity="0.10"/><ellipse cx="2052.4" cy="754.1" rx="37.9" ry="43.6" fill="#0a0e1a"/><path d="M1972.8 882.8 q3.8 -87.1 79.5 -90.9 q75.7 3.8 79.5 90.9z" fill="#0a0e1a"/><ellipse cx="-61.3" cy="827.8" rx="43.1" ry="49.3" fill="#1f5f8f" opacity="0.07"/><ellipse cx="-61.3" cy="831.2" rx="44" ry="50.6" fill="#080b14"/><path d="M-153.7 980.8 q4.4 -101.2 92.4 -105.6 q88 4.4 92.4 105.6z" fill="#080b14"/><ellipse cx="2.3" cy="794.1" rx="48.5" ry="55.4" fill="#1f5f8f" opacity="0.07"/><ellipse cx="2.3" cy="797.5" rx="49.4" ry="56.9" fill="#080b14"/><path d="M-101.5 965.6 q4.9 -113.7 103.8 -118.7 q98.9 4.9 103.8 118.7z" fill="#080b14"/><ellipse cx="117.4" cy="807.2" rx="46" ry="52.5" fill="#1f5f8f" opacity="0.07"/><ellipse cx="117.4" cy="810.6" rx="46.9" ry="54" fill="#080b14"/><path d="M18.9 970.1 q4.7 -107.9 98.5 -112.6 q93.8 4.7 98.5 112.6z" fill="#080b14"/><ellipse cx="249.9" cy="824.3" rx="54" ry="61.7" fill="#1f5f8f" opacity="0.11"/><ellipse cx="249.9" cy="827.7" rx="55.1" ry="63.4" fill="#080b14"/><path d="M134.1 1015.1 q5.5 -126.8 115.8 -132.3 q110.2 5.5 115.8 132.3z" fill="#080b14"/><ellipse cx="365.8" cy="838.9" rx="40.9" ry="46.8" fill="#1f5f8f" opacity="0.16"/><ellipse cx="365.8" cy="842.3" rx="41.7" ry="48" fill="#080b14"/><path d="M278.1 984.2 q4.2 -96 87.7 -100.2 q83.5 4.2 87.7 100.2z" fill="#080b14"/><ellipse cx="486.4" cy="800" rx="48.1" ry="55" fill="#1f5f8f" opacity="0.21"/><ellipse cx="486.4" cy="803.5" rx="49.1" ry="56.4" fill="#080b14"/><path d="M383.4 970.3 q4.9 -112.9 103 -117.8 q98.1 4.9 103 117.8z" fill="#080b14"/><ellipse cx="607.7" cy="812.4" rx="50.3" ry="57.5" fill="#1f5f8f" opacity="0.26"/><ellipse cx="607.7" cy="815.8" rx="51.4" ry="59.1" fill="#080b14"/><path d="M499.8 990.5 q5.1 -118.2 107.9 -123.3 q102.8 5.1 107.9 123.3z" fill="#080b14"/><ellipse cx="723.8" cy="840.8" rx="48.3" ry="55.2" fill="#1f5f8f" opacity="0.31"/><ellipse cx="723.8" cy="844.2" rx="49.3" ry="56.7" fill="#080b14"/><path d="M620.3 1011.7 q4.9 -113.3 103.5 -118.3 q98.5 4.9 103.5 118.3z" fill="#080b14"/><ellipse cx="804.8" cy="829.6" rx="55.2" ry="63.1" fill="#1f5f8f" opacity="0.35"/><ellipse cx="804.8" cy="833.1" rx="56.4" ry="64.8" fill="#080b14"/><path d="M686.4 1024.7 q5.6 -129.6 118.4 -135.3 q112.7 5.6 118.4 135.3z" fill="#080b14"/><ellipse cx="944" cy="804.2" rx="56.8" ry="65" fill="#1f5f8f" opacity="0.41"/><ellipse cx="944" cy="807.7" rx="58" ry="66.7" fill="#080b14"/><path d="M822.2 1004.9 q5.8 -133.4 121.8 -139.2 q116 5.8 121.8 139.2z" fill="#080b14"/><ellipse cx="1084.1" cy="820.4" rx="54.7" ry="62.5" fill="#1f5f8f" opacity="0.37"/><ellipse cx="1084.1" cy="823.8" rx="55.8" ry="64.2" fill="#080b14"/><path d="M966.9 1013.6 q5.6 -128.4 117.2 -134 q111.6 5.6 117.2 134z" fill="#080b14"/><ellipse cx="1179" cy="836.3" rx="46" ry="52.6" fill="#1f5f8f" opacity="0.33"/><ellipse cx="1179" cy="839.8" rx="47" ry="54" fill="#080b14"/><path d="M1080.3 999.5 q4.7 -108 98.6 -112.7 q93.9 4.7 98.6 112.7z" fill="#080b14"/><ellipse cx="1242.4" cy="821.1" rx="54.3" ry="62" fill="#1f5f8f" opacity="0.31"/><ellipse cx="1242.4" cy="824.5" rx="55.4" ry="63.7" fill="#080b14"/><path d="M1126.1 1012.8 q5.5 -127.3 116.3 -132.9 q110.7 5.5 116.3 132.9z" fill="#080b14"/><ellipse cx="1326" cy="834" rx="40.5" ry="46.2" fill="#1f5f8f" opacity="0.27"/><ellipse cx="1326" cy="837.5" rx="41.3" ry="47.5" fill="#080b14"/><path d="M1239.3 977.8 q4.1 -94.9 86.7 -99.1 q82.6 4.1 86.7 99.1z" fill="#080b14"/><ellipse cx="1452.4" cy="810.3" rx="54.6" ry="62.4" fill="#1f5f8f" opacity="0.22"/><ellipse cx="1452.4" cy="813.8" rx="55.8" ry="64.1" fill="#080b14"/><path d="M1335.3 1003.3 q5.6 -128.2 117.1 -133.8 q111.5 5.6 117.1 133.8z" fill="#080b14"/><ellipse cx="1541.9" cy="819.4" rx="53.4" ry="61" fill="#1f5f8f" opacity="0.18"/><ellipse cx="1541.9" cy="822.8" rx="54.5" ry="62.6" fill="#080b14"/><path d="M1427.5 1008 q5.4 -125.3 114.4 -130.7 q108.9 5.4 114.4 130.7z" fill="#080b14"/><ellipse cx="1690.9" cy="840.8" rx="48.9" ry="55.8" fill="#1f5f8f" opacity="0.11"/><ellipse cx="1690.9" cy="844.3" rx="49.9" ry="57.3" fill="#080b14"/><path d="M1586.2 1013.8 q5 -114.7 104.7 -119.6 q99.7 5 104.7 119.6z" fill="#080b14"/><ellipse cx="1784" cy="804.6" rx="49.5" ry="56.6" fill="#1f5f8f" opacity="0.07"/><ellipse cx="1784" cy="808.1" rx="50.5" ry="58.1" fill="#080b14"/><path d="M1677.9 979.9 q5.1 -116.2 106.1 -121.3 q101.1 5.1 106.1 121.3z" fill="#080b14"/><ellipse cx="1915.2" cy="825.5" rx="49.4" ry="56.5" fill="#1f5f8f" opacity="0.07"/><ellipse cx="1915.2" cy="828.9" rx="50.5" ry="58" fill="#080b14"/><path d="M1809.2 1000.5 q5 -116 106 -121.1 q100.9 5 106 121.1z" fill="#080b14"/><ellipse cx="2026.8" cy="809.1" rx="46.7" ry="53.3" fill="#1f5f8f" opacity="0.07"/><ellipse cx="2026.8" cy="812.6" rx="47.6" ry="54.8" fill="#080b14"/><path d="M1926.8 974.5 q4.8 -109.5 100 -114.3 q95.2 4.8 100 114.3z" fill="#080b14"/><ellipse cx="-148.6" cy="924.3" rx="76.8" ry="87.8" fill="#1c4f9f" opacity="0.07"/><ellipse cx="-148.6" cy="928.2" rx="78.4" ry="90.1" fill="#080b14"/><path d="M-313.2 1194.6 q7.8 -180.2 164.6 -188.1 q156.7 7.8 164.6 188.1z" fill="#080b14"/><ellipse cx="20.7" cy="881.4" rx="65.6" ry="75" fill="#1c4f9f" opacity="0.07"/><ellipse cx="20.7" cy="885.3" rx="66.9" ry="77" fill="#080b14"/><path d="M-119.9 1112.9 q6.7 -154 140.6 -160.7 q133.9 6.7 140.6 160.7z" fill="#080b14"/><ellipse cx="165.2" cy="870" rx="76.8" ry="87.8" fill="#1c4f9f" opacity="0.07"/><ellipse cx="165.2" cy="873.8" rx="78.4" ry="90.2" fill="#080b14"/><path d="M0.5 1140.4 q7.8 -180.3 164.6 -188.1 q156.8 7.8 164.6 188.1z" fill="#080b14"/><ellipse cx="293.5" cy="921" rx="66.3" ry="75.8" fill="#1c4f9f" opacity="0.13"/><ellipse cx="293.5" cy="924.9" rx="67.7" ry="77.8" fill="#080b14"/><path d="M151.4 1154.9 q6.8 -155.6 142.1 -162.4 q135.3 6.8 142.1 162.4z" fill="#080b14"/><ellipse cx="455.6" cy="872.5" rx="65.7" ry="75.1" fill="#1c4f9f" opacity="0.20"/><ellipse cx="455.6" cy="876.3" rx="67" ry="77.1" fill="#080b14"/><path d="M314.9 1104.2 q6.7 -154.2 140.7 -160.9 q134 6.7 140.7 160.9z" fill="#080b14"/><ellipse cx="611.6" cy="929.1" rx="58.7" ry="67.1" fill="#1c4f9f" opacity="0.26"/><ellipse cx="611.6" cy="932.9" rx="59.9" ry="68.9" fill="#080b14"/><path d="M485.8 1136.6 q6 -137.8 125.8 -143.8 q119.8 6 125.8 143.8z" fill="#080b14"/><ellipse cx="693.2" cy="896.8" rx="72.8" ry="83.3" fill="#1c4f9f" opacity="0.30"/><ellipse cx="693.2" cy="900.6" rx="74.3" ry="85.5" fill="#080b14"/><path d="M537.1 1153.4 q7.4 -171 156.1 -178.4 q148.7 7.4 156.1 178.4z" fill="#080b14"/><ellipse cx="882.7" cy="889.1" rx="56.7" ry="64.8" fill="#1c4f9f" opacity="0.38"/><ellipse cx="882.7" cy="892.9" rx="57.9" ry="66.5" fill="#080b14"/><path d="M761.3 1089.6 q5.8 -133.1 121.5 -138.9 q115.7 5.8 121.5 138.9z" fill="#080b14"/><ellipse cx="1063.3" cy="876.7" rx="71.9" ry="82.2" fill="#1c4f9f" opacity="0.38"/><ellipse cx="1063.3" cy="880.5" rx="73.4" ry="84.4" fill="#080b14"/><path d="M909.2 1130 q7.3 -168.8 154.1 -176.1 q146.7 7.3 154.1 176.1z" fill="#080b14"/><ellipse cx="1126.3" cy="883.1" rx="69.5" ry="79.5" fill="#1c4f9f" opacity="0.36"/><ellipse cx="1126.3" cy="887" rx="70.9" ry="81.6" fill="#080b14"/><path d="M977.3 1128.2 q7.1 -163.2 149 -170.3 q141.9 7.1 149 170.3z" fill="#080b14"/><ellipse cx="1269.6" cy="909.1" rx="54.5" ry="62.2" fill="#1c4f9f" opacity="0.29"/><ellipse cx="1269.6" cy="912.9" rx="55.6" ry="63.9" fill="#080b14"/><path d="M1152.9 1101.8 q5.6 -127.8 116.7 -133.4 q111.1 5.6 116.7 133.4z" fill="#080b14"/><ellipse cx="1408.2" cy="901.8" rx="58.2" ry="66.5" fill="#1c4f9f" opacity="0.24"/><ellipse cx="1408.2" cy="905.7" rx="59.4" ry="68.3" fill="#080b14"/><path d="M1283.5 1107.7 q5.9 -136.7 124.8 -142.6 q118.8 5.9 124.8 142.6z" fill="#080b14"/><ellipse cx="1562" cy="897" rx="61.5" ry="70.2" fill="#1c4f9f" opacity="0.17"/><ellipse cx="1562" cy="900.8" rx="62.7" ry="72.1" fill="#080b14"/><path d="M1430.3 1114.1 q6.3 -144.3 131.7 -150.5 q125.4 6.3 131.7 150.5z" fill="#080b14"/><ellipse cx="1699" cy="878.7" rx="57" ry="65.2" fill="#1c4f9f" opacity="0.11"/><ellipse cx="1699" cy="882.5" rx="58.2" ry="66.9" fill="#080b14"/><path d="M1576.8 1080.4 q5.8 -133.8 122.2 -139.7 q116.4 5.8 122.2 139.7z" fill="#080b14"/><ellipse cx="1856.2" cy="903.1" rx="73.8" ry="84.3" fill="#1c4f9f" opacity="0.07"/><ellipse cx="1856.2" cy="907" rx="75.3" ry="86.6" fill="#080b14"/><path d="M1698.1 1162.9 q7.5 -173.1 158.1 -180.7 q150.5 7.5 158.1 180.7z" fill="#080b14"/><ellipse cx="2020.1" cy="883.5" rx="70.9" ry="81" fill="#1c4f9f" opacity="0.07"/><ellipse cx="2020.1" cy="887.4" rx="72.4" ry="83.2" fill="#080b14"/><path d="M1868.1 1133.4 q7.2 -166.4 151.9 -173.7 q144.7 7.2 151.9 173.7z" fill="#080b14"/><ellipse cx="-189" cy="979.3" rx="100.8" ry="115.2" fill="#1c4f9f" opacity="0.05"/><ellipse cx="-189" cy="983.7" rx="102.9" ry="118.3" fill="#080b14"/><path d="M-405.1 1333.5 q10.3 -236.6 216.1 -246.9 q205.8 10.3 216.1 246.9z" fill="#080b14"/><ellipse cx="44.4" cy="1029.7" rx="73.6" ry="84.1" fill="#1c4f9f" opacity="0.05"/><ellipse cx="44.4" cy="1034.1" rx="75.1" ry="86.4" fill="#080b14"/><path d="M-113.3 1289.5 q7.5 -172.8 157.7 -180.3 q150.2 7.5 157.7 180.3z" fill="#080b14"/><ellipse cx="188.8" cy="974.4" rx="72.3" ry="82.7" fill="#1c4f9f" opacity="0.06"/><ellipse cx="188.8" cy="978.8" rx="73.8" ry="84.9" fill="#080b14"/><path d="M33.8 1229.8 q7.4 -169.8 155 -177.2 q147.6 7.4 155 177.2z" fill="#080b14"/><ellipse cx="375.1" cy="1021.1" rx="73.3" ry="83.8" fill="#1c4f9f" opacity="0.12"/><ellipse cx="375.1" cy="1025.5" rx="74.8" ry="86.1" fill="#080b14"/><path d="M217.9 1280 q7.5 -172.1 157.2 -179.6 q149.7 7.5 157.2 179.6z" fill="#080b14"/><ellipse cx="582.7" cy="953.2" rx="75.9" ry="86.8" fill="#1c4f9f" opacity="0.18"/><ellipse cx="582.7" cy="957.6" rx="77.5" ry="89.1" fill="#080b14"/><path d="M420 1221 q7.7 -178.2 162.7 -185.9 q154.9 7.7 162.7 185.9z" fill="#080b14"/><ellipse cx="808.1" cy="1036.8" rx="73" ry="83.4" fill="#1c4f9f" opacity="0.25"/><ellipse cx="808.1" cy="1041.2" rx="74.5" ry="85.6" fill="#080b14"/><path d="M651.7 1294.4 q7.4 -171.3 156.4 -178.7 q148.9 7.4 156.4 178.7z" fill="#080b14"/><ellipse cx="983.9" cy="995.8" rx="92.6" ry="105.9" fill="#1c4f9f" opacity="0.30"/><ellipse cx="983.9" cy="1000.2" rx="94.5" ry="108.7" fill="#080b14"/><path d="M785.4 1321.7 q9.5 -217.4 198.5 -226.9 q189.1 9.5 198.5 226.9z" fill="#080b14"/><ellipse cx="1085" cy="960.9" rx="70.3" ry="80.3" fill="#1c4f9f" opacity="0.27"/><ellipse cx="1085" cy="965.3" rx="71.7" ry="82.5" fill="#080b14"/><path d="M934.4 1209.2 q7.2 -165 150.6 -172.1 q143.4 7.2 150.6 172.1z" fill="#080b14"/><ellipse cx="1321.1" cy="1001.6" rx="74" ry="84.6" fill="#1c4f9f" opacity="0.19"/><ellipse cx="1321.1" cy="1006" rx="75.6" ry="86.9" fill="#080b14"/><path d="M1162.4 1262.9 q7.6 -173.8 158.7 -181.3 q151.1 7.6 158.7 181.3z" fill="#080b14"/><ellipse cx="1457.6" cy="1025.5" rx="103.2" ry="117.9" fill="#1c4f9f" opacity="0.15"/><ellipse cx="1457.6" cy="1029.9" rx="105.3" ry="121" fill="#080b14"/><path d="M1236.6 1387.8 q10.5 -242.1 221 -252.6 q210.5 10.5 221 252.6z" fill="#080b14"/><ellipse cx="1669.7" cy="957.1" rx="101.8" ry="116.4" fill="#1c4f9f" opacity="0.09"/><ellipse cx="1669.7" cy="961.5" rx="103.9" ry="119.5" fill="#080b14"/><path d="M1451.5 1314.7 q10.4 -239 218.2 -249.3 q207.8 10.4 218.2 249.3z" fill="#080b14"/><ellipse cx="1920.4" cy="980.4" rx="85.1" ry="97.3" fill="#1c4f9f" opacity="0.05"/><ellipse cx="1920.4" cy="984.8" rx="86.8" ry="99.9" fill="#080b14"/><path d="M1738.1 1280 q8.7 -199.7 182.4 -208.4 q173.7 8.7 182.4 208.4z" fill="#080b14"/><ellipse cx="2079.8" cy="1004.5" rx="69.4" ry="79.4" fill="#1c4f9f" opacity="0.05"/><ellipse cx="2079.8" cy="1008.9" rx="70.9" ry="81.5" fill="#080b14"/><path d="M1931 1249.8 q7.1 -163 148.8 -170.1 q141.7 7.1 148.8 170.1z" fill="#080b14"/><ellipse cx="-250.9" cy="1094.6" rx="124.6" ry="142.4" fill="#1c4f9f" opacity="0.05"/><ellipse cx="-250.9" cy="1099.7" rx="127.1" ry="146.2" fill="#080b14"/><path d="M-517.8 1531.8 q12.7 -292.3 266.9 -305.1 q254.2 12.7 266.9 305.1z" fill="#080b14"/><ellipse cx="-8.6" cy="1061" rx="114.3" ry="130.6" fill="#1c4f9f" opacity="0.05"/><ellipse cx="-8.6" cy="1066.1" rx="116.6" ry="134.1" fill="#080b14"/><path d="M-253.5 1462.5 q11.7 -268.1 244.8 -279.8 q233.2 11.7 244.8 279.8z" fill="#080b14"/><ellipse cx="280.2" cy="1134.9" rx="123" ry="140.6" fill="#1c4f9f" opacity="0.09"/><ellipse cx="280.2" cy="1140" rx="125.5" ry="144.3" fill="#080b14"/><path d="M16.6 1566.7 q12.5 -288.6 263.5 -301.2 q251 12.5 263.5 301.2z" fill="#080b14"/><ellipse cx="533.3" cy="1088.8" rx="118.2" ry="135.1" fill="#1c4f9f" opacity="0.17"/><ellipse cx="533.3" cy="1093.9" rx="120.6" ry="138.7" fill="#080b14"/><path d="M279.9 1504 q12.1 -277.4 253.3 -289.5 q241.2 12.1 253.3 289.5z" fill="#080b14"/><ellipse cx="827.8" cy="1135.3" rx="102.7" ry="117.4" fill="#1c4f9f" opacity="0.26"/><ellipse cx="827.8" cy="1140.4" rx="104.8" ry="120.5" fill="#080b14"/><path d="M607.8 1496.6 q10.5 -241 220 -251.5 q209.6 10.5 220 251.5z" fill="#080b14"/><ellipse cx="1089.2" cy="1132.1" rx="128" ry="146.3" fill="#1c4f9f" opacity="0.27"/><ellipse cx="1089.2" cy="1137.2" rx="130.6" ry="150.2" fill="#080b14"/><path d="M814.9 1581.3 q13.1 -300.4 274.3 -313.4 q261.2 13.1 274.3 313.4z" fill="#080b14"/><ellipse cx="1348.8" cy="1144" rx="122.5" ry="140" fill="#1c4f9f" opacity="0.19"/><ellipse cx="1348.8" cy="1149.1" rx="125" ry="143.8" fill="#080b14"/><path d="M1086.2 1574.2 q12.5 -287.6 262.6 -300.1 q250.1 12.5 262.6 300.1z" fill="#080b14"/><ellipse cx="1609.1" cy="1089" rx="123.8" ry="141.5" fill="#1c4f9f" opacity="0.11"/><ellipse cx="1609.1" cy="1094.1" rx="126.3" ry="145.3" fill="#080b14"/><path d="M1343.8 1523.6 q12.6 -290.6 265.3 -303.2 q252.7 12.6 265.3 303.2z" fill="#080b14"/><ellipse cx="1763.2" cy="1096.3" rx="91.4" ry="104.5" fill="#1c4f9f" opacity="0.06"/><ellipse cx="1763.2" cy="1101.4" rx="93.3" ry="107.3" fill="#080b14"/><path d="M1567.3 1418.6 q9.3 -214.6 195.9 -223.9 q186.6 9.3 195.9 223.9z" fill="#080b14"/><ellipse cx="2035.9" cy="1114.3" rx="101.5" ry="116" fill="#1c4f9f" opacity="0.05"/><ellipse cx="2035.9" cy="1119.4" rx="103.6" ry="119.1" fill="#080b14"/><path d="M1818.4 1471.5 q10.4 -238.2 217.5 -248.6 q207.1 10.4 217.5 248.6z" fill="#080b14"/></g><rect x="0" y="820" width="1995" height="310" fill="url(#scr2)"/><g fill="none"><path d="M1255 318l8 3M726 122l2 -6M1220 270l10 2M903 610l5 -5M1154 578l7 1M929 115l10 1M812 176l6 1M866 100l8 1M1058 361l9 2M1116 398l9 -1M869 370l9 -1M766 239l5 1M1212 236l5 7M1110 110l3 -5M982 560l9 1M813 53l7 1M1039 517l6 1M813 300l7 3M728 284l7 -1M937 71l9 3M824 300l5 -5M835 341l6 2M1053 571l6 -2M941 161l10 1M893 344l5 4M871 111l7 8M989 534l6 -0M708 153l8 -2M1054 256l7 -2M1010 489l3 -5M1327 511l7 0M853 404l5 1M1152 389l5 -4M783 441l6 -1M909 659l3 9M1128 483l1 7M968 93l5 -3M981 347l8 3M868 326l7 1M1040 346l3 -9M616 447l1 -9M1116 227l4 4M960 92l3 -8M1139 264l1 6M969 652l4 7M1199 111l6 -0M1014 412l4 -8M886 596l8 -2M894 529l5 -1M801 309l9 -2M1014 515l4 7M940 290l10 1M951 127l8 3M1155 208l6 5M910 411l10 2M999 192l6 2M1336 597l3 8M877 278l5 9M1183 64l8 1M712 167l8 2M1063 339l9 -3M838 446l10 -1M717 677l6 2M899 388l6 -2M720 255l2 9M1015 319l2 -9M1056 246l8 -1M826 16l9 2M1088 582l9 1M822 158l1 -7M1092 239l8 0M882 355l7 2M1271 404l6 -0M1200 151l7 -0M1061 160l6 1M1322 457l8 -2M966 354l7 -1M800 300l1 10M1002 318l5 2M720 196l5 2M1273 458l7 0M866 210l9 2M1321 393l1 -6M1013 336l9 -5M992 25l5 -1M1017 335l3 -9M1004 405l6 -1M912 330l7 -4M1174 157l2 7M735 513l7 2M955 492l4 8M593 211l6 3M975 365l6 1M948 574l2 -8M780 344l10 -3M811 374l7 -1M1245 428l6 2M1135 255l6 -2M837 151l10 -2M1349 206l6 -1M961 275l8 -1M1185 447l5 -1M835 302l7 4M1069 164l6 2M676 397l9 2M1143 511l6 -8M1308 349l6 1M564 38l1 10M997 173l5 1M1194 231l5 -2M1056 329l6 1M980 458l9 -2M1031 519l3 -8M828 205l6 3M1132 280l3 -5M878 302l5 1M1122 384l5 -1M885 418l7 1M791 191l5 -1M1159 23l8 -4M877 380l3 -7M967 373l2 8M980 351l5 1M836 253l4 -8M945 442l6 0M892 404l8 6M1037 331l2 -9M586 333l1 -5M1222 172l6 -0M961 216l6 -6M1129 40l9 -2M665 333l2 -8M975 212l5 -2M750 417l4 3M796 181l5 -6M1068 523l6 -5M1315 487l10 0M1298 430l9 2M925 523l6 -1M1201 424l5 -6M1322 290l6 3M1027 67l4 -7M818 380l7 7M1155 409l7 1M834 287l7 5M1088 149l6 2M921 471l9 3M737 104l10 -2M1042 450l4 -7M934 269l6 1M1116 410l4 -6M1189 442l6 -1M947 229l8 1M888 426l6 -7M957 435l9 3M1053 474l6 -2M1031 30l4 5M1298 126l10 2M927 153l8 3M1075 210l6 -1M811 108l6 -8M1018 173l9 1M961 194l8 0M1046 385l5 -5M1321 634l10 -3M906 135l8 0M1069 115l9 2M987 270l3 5M836 242l2 10M889 216l9 2M1092 254l6 -1M911 33l9 4M1181 77l7 0M1280 106l7 7M812 269l3 9M776 185l8 -3M1002 220l6 1M956 226l7 -0M913 277l10 1M848 159l9 -3M784 555l1 9M1156 78l7 6M1176 402l8 2M1347 208l2 8M909 433l9 1M1137 416l2 -7M900 320l2 -5M1322 240l9 -2M687 211l8 4M1052 476l10 0M962 411l5 -7M1010 395l5 0M1265 371l9 -3M1156 5l6 1M753 444l6 -2M921 546l6 -5M928 510l10 0M937 578l6 -2M1061 645l8 1M1070 487l6 -1M892 623l9 3M620 459l6 -2M1109 528l7 1M798 583l1 -5M1186 662l4 -3M888 414l9 -2M651 635l5 -4M1278 660l6 4M827 513l6 1M1121 513l9 0M946 638l7 -8M962 455l8 -2M727 540l10 1M1081 503l10 -3M1366 551l9 -3M788 516l9 3M1260 595l5 2M742 509l7 -2M1009 638l8 -4M910 636l5 -2M1094 542l4 6M1302 648l5 8M889 660l2 5M874 646l8 3M1058 671l5 1M1051 538l1 -10M1257 607l9 1M1231 446l7 3M824 595l10 -0M1002 658l4 3M738 438l2 -7M1198 546l6 1M1050 491l6 2M1005 640l9 0M781 628l5 1M1002 613l9 3M1046 651l2 -8M977 523l6 0M1076 546l7 -1M1053 632l6 -4M950 622l9 0M1112 691l3 9M1221 559l4 -7M1323 421l9 3M995 564l9 1M806 684l6 -0M1040 613l6 -4M953 533l3 6M985 577l8 2M884 463l5 -6M1083 655l6 -1M1013 644l5 -4M1040 549l8 -2M1076 578l10 -3M910 466l8 -0M974 635l7 1M976 626l9 2M1005 679l7 0M874 614l5 -3M686 554l6 -5M1119 534l4 5M860 507l4 -6M722 434l7 -8M886 619l5 4M871 490l5 5M991 613l10 -1M1008 512l5 2M1046 462l8 -3M930 433l7 2M1016 591l8 -0M958 581l5 6M1172 602l8 1M1227 486l7 -5M1072 522l6 5M693 600l7 0M928 417l6 -2M1058 543l6 0M1077 556l5 1M1260 474l6 -0" stroke="#f4efe6" stroke-width="3.1" opacity=".82"/><path d="M1360 495l1 7M1010 95l10 2M1286 577l9 -1M701 241l5 -5M852 528l9 -0M1382 101l6 8M884 491l10 -2M1028 508l6 -2M592 118l3 -4M999 616l5 -7M1125 233l8 -0M907 76l5 -3M1178 615l2 -6M1110 82l4 3M846 220l6 -4M738 490l5 4M1319 284l8 -3M1090 343l10 1M1145 485l7 -7M934 380l10 -1M1361 494l5 6M945 566l5 -1M1080 312l7 -2M996 19l6 1M1057 223l6 4M937 174l2 7M999 27l9 -5M889 497l7 5M804 425l8 -6M1189 395l7 -4M1118 538l8 -1M1145 28l5 3M1006 218l2 6M856 216l6 -2M1060 310l8 6M1005 300l8 -3M767 39l7 -1M844 479l5 -1M887 133l8 -3M1005 222l1 -7M882 670l2 8M957 70l7 -2M758 195l5 -2M1248 358l8 -1M731 478l6 -1M730 42l2 -5M1213 241l8 -1M958 178l7 -0M776 266l6 -2M637 290l4 -4M1103 535l3 -5M765 197l7 2M770 211l9 6M992 76l10 1M1272 230l7 1M969 360l7 -5M943 92l8 2M745 536l10 2M1021 412l4 5M1032 97l5 -1M1055 7l7 -1M681 325l1 -7M947 182l2 8M1129 289l5 6M740 333l7 0M1242 427l5 1M703 342l7 -2M1316 271l7 1M798 563l4 4M736 229l7 8M1045 596l4 8M907 553l5 -5M1212 157l6 1M1025 295l5 7M940 205l8 -1M1230 185l4 -4M1141 82l10 1M1124 118l4 -9M870 280l9 3M801 264l0 -5M833 488l6 -1M1065 374l1 5M762 394l5 6M903 6l7 -1M1326 196l5 -2M760 459l6 3M775 332l5 -4M1007 346l3 7M1398 164l10 -2M693 382l1 8M920 115l9 0M1185 308l9 1M1146 332l7 -1M813 300l7 -3M924 191l9 1M729 173l9 -2M596 58l8 -1M831 260l8 1M768 175l9 0M751 297l6 -2M799 123l8 3M1174 220l4 5M1011 598l8 3M1013 352l3 -4M734 397l9 2M885 376l9 1M855 313l9 -3M979 478l9 -1M1071 289l10 2M1140 9l2 -6M600 330l6 -2M1061 621l8 0M748 359l7 -2M917 216l9 -3M1155 241l8 -3M817 367l7 -1M800 329l9 1M928 204l5 -8M1021 306l6 1M1002 465l7 0M1017 428l8 -2M1168 330l2 -7M609 320l7 1M827 5l1 6M925 517l8 2M960 510l9 -1M923 484l6 -2M1018 328l1 -7M951 147l10 1M944 400l7 -2M775 438l6 -0M602 532l3 4M666 620l7 -2M1157 215l4 6M1161 344l7 2M696 443l9 -3M793 172l5 -1M727 511l9 0M1162 415l2 9M617 450l1 5M1119 355l7 -2M955 118l6 -2M986 52l5 -5M757 420l9 -2M1029 554l9 -5M919 264l8 2M762 264l10 0M818 362l2 -7M1260 367l5 -1M1356 451l8 4M808 311l8 2M942 589l9 -2M1081 526l3 7M704 133l9 1M1280 515l7 2M1073 328l8 3M1210 348l7 1M1094 571l6 -4M1022 10l7 -8M1289 301l7 -4M1087 155l5 -1M1083 259l6 7M700 600l5 2M907 641l9 -6M940 618l7 -1M909 562l9 -3M1162 650l3 8M1158 568l3 -5M695 378l3 7M795 634l9 -1M1045 621l6 1M909 467l7 -5M946 472l6 0M1010 619l2 6M1098 545l6 2M919 653l5 1M1083 562l7 1M1108 685l10 -3M1168 499l9 -2M987 654l5 -2M948 624l1 -8M900 621l6 1M845 624l8 2M827 552l5 -2M832 577l8 1M868 528l10 2M982 630l1 5M872 470l7 -2M788 553l2 5M939 552l7 -2M1072 498l6 -1M995 505l7 2M857 643l2 6M826 553l5 -2M1021 618l3 8M979 483l10 -2M936 589l6 9M956 617l7 0M667 515l7 2M689 565l7 1M964 620l6 -2M994 426l9 -2M763 621l5 -1M1177 521l8 1M1033 674l6 1M1252 529l8 -2M1006 592l8 -2M1003 548l9 1M1027 531l6 -1M1156 574l7 -8M847 643l4 -9M918 645l10 -2M974 483l6 -4M933 472l7 -1M995 610l2 8M656 557l10 -0M1356 598l7 0M1091 512l5 0M1146 698l2 -6M727 566l5 1M863 473l6 1M921 454l1 9M804 645l8 -3M1009 403l8 -3M1216 398l8 2M1132 431l5 1" stroke="#e9e2d0" stroke-width="3.1" opacity=".82"/><path d="M876 175l9 0M904 379l6 0M693 141l5 -1M1085 505l2 8M690 416l7 2M1325 130l4 -3M1304 536l5 1M720 328l9 3M1244 250l8 2M1188 501l2 -9M1128 593l4 5M1105 393l9 -1M1224 248l6 7M658 381l7 -2M1024 385l9 -2M828 493l5 2M914 229l10 -0M917 291l5 -1M1132 561l9 -3M848 448l10 -3M1067 221l8 -2M958 285l2 -7M1289 208l8 -1M1015 273l4 5M1070 316l7 1M847 434l9 -1M1089 672l5 6M1026 370l7 -1M758 176l7 3M916 581l5 1M837 96l10 3M1105 85l8 -3M827 338l1 -9M853 435l8 -1M1010 125l9 -1M1125 479l5 -4M1411 466l7 -1M784 289l6 4M1401 191l9 -3M1042 319l9 2M694 153l7 -3M1165 528l9 3M982 392l6 2M1139 29l6 0M1036 177l6 -2M1009 192l9 1M1241 239l5 -5M942 159l9 1M1113 387l4 -8M951 649l8 -3M1039 453l9 -1M757 132l9 -2M656 445l8 -2M780 280l6 0M1350 319l8 -2M816 395l5 5M892 635l1 -8M730 146l10 -2M608 308l7 -0M873 339l3 5M1026 372l9 -3M626 374l9 1M1110 381l9 1M1161 375l2 -7M1033 470l9 -1M1128 156l4 -3M919 266l10 2M1177 61l4 10M974 351l7 -1M1324 322l5 1M780 166l9 -3M938 26l6 2M908 137l6 -9M1305 513l5 1M805 332l6 -1M954 687l6 -0M633 455l7 7M783 294l7 -2M1155 449l2 6M999 383l6 2M888 200l8 3M763 380l5 7M742 244l6 -4M566 46l2 8M950 305l9 -2M1334 380l7 -2M805 343l8 -5M724 466l7 -1M716 129l9 -1M1141 404l2 -9M668 212l8 4M961 339l7 8M1385 171l5 6M1330 573l6 0M937 332l4 -7M734 253l6 -8M1200 460l8 0M742 173l10 -3M1185 433l7 1M1002 369l9 -0M852 425l10 1M1021 599l3 9M1050 66l8 -6M854 540l4 6M958 148l9 -3M865 319l7 -2M851 297l6 0M763 329l8 -3M1156 676l7 6M886 113l8 2M1155 120l9 -1M1139 450l2 8M1019 269l7 2M798 320l8 1M1004 334l8 0M752 452l10 2M844 303l1 -10M694 483l6 6M904 461l7 1M1212 251l6 -2M734 272l3 -8M994 563l4 -5M1035 695l7 0M806 462l6 2M962 672l5 -7M807 673l6 -1M1148 434l6 -0M962 611l5 -0M1269 582l5 -0M707 394l8 3M962 640l2 5M1267 502l0 5M856 557l5 -3M970 458l3 -4M945 586l5 -6M1311 429l9 -0M847 525l9 -2M899 518l5 6M1181 534l9 0M1019 637l10 -0M1243 605l8 -0M832 489l9 2M1060 516l5 -9M968 624l7 1M896 544l1 -8M930 610l5 -1M1152 503l6 -7M725 437l10 -2M1004 635l8 0M977 573l8 5M955 592l10 -0M1115 614l1 8M949 659l6 -2M999 625l7 -4M938 611l10 -2M1238 676l7 -1M777 508l7 2M842 489l6 -2M1209 615l6 -7M884 571l7 4M1188 467l5 -9M1195 506l5 1M1005 615l7 -0M1110 628l7 -2M1132 638l5 -2M1266 574l10 -0M975 539l4 -6M995 638l6 -2M1015 650l6 4M956 612l6 7M718 529l4 -9M1200 510l10 -1M949 576l5 -1M745 545l5 -8M1084 518l6 1" stroke="#ffffff" stroke-width="3.1" opacity=".82"/><path d="M703 277l6 3M767 550l6 4M844 454l4 -6M1089 217l5 1M1132 157l8 -1M1043 279l9 1M1094 93l6 2M921 581l5 -0M1108 402l7 -6M1074 446l5 2M928 267l7 2M855 482l6 1M1056 512l8 -1M1023 449l1 -9M716 105l9 6M771 406l5 -2M991 316l8 -1M834 656l5 0M1050 242l10 1M888 325l7 2M875 467l5 -1M934 371l3 -6M890 479l10 -1M776 305l4 -3M748 277l6 -7M979 486l5 -2M1067 295l7 1M1213 410l9 -1M1301 142l1 5M922 110l5 -2M997 360l6 5M1263 135l3 -5M892 433l5 -1M741 396l3 4M1221 135l9 1M1107 427l7 -1M955 332l9 3M938 245l3 -6M650 476l7 -1M1315 53l6 -2M1049 356l8 6M975 504l9 1M921 198l5 -4M1246 433l5 -9M1103 154l5 6M871 364l9 2M1096 356l7 2M1157 351l7 0M1121 460l10 -1M1250 316l1 -7M1156 471l7 2M875 516l10 3M988 237l3 -5M795 204l6 7M984 185l8 1M801 137l5 7M923 87l8 -6M929 434l1 -6M1040 320l5 1M959 161l5 1M908 338l5 0M833 279l2 -6M1079 287l4 5M634 488l7 -0M946 282l7 7M864 492l6 -2M866 540l2 -8M1049 659l8 6M771 415l8 -1M683 319l9 -2M897 232l5 -4M850 449l6 -0M747 353l6 1M790 416l6 -1M945 316l8 2M718 624l6 1M1010 165l10 1M1160 196l4 9M967 510l6 8M1367 349l6 4M1092 68l5 -2M1071 515l2 5M982 644l2 -5M952 54l5 -4M794 526l6 -2M746 523l4 -5M885 451l1 6M957 586l2 -10M985 553l5 -0M933 568l7 -0M913 493l3 5M1042 621l9 0M815 627l4 9M871 660l10 1M1334 659l8 1M1221 571l10 1M1051 612l6 -8M1183 649l6 -2M876 614l8 3M730 518l4 7M1214 609l8 -1M999 500l9 -0M978 582l10 -1M1123 557l10 -3M1115 608l10 -0M1159 556l9 -3M761 526l8 0M1077 571l10 -2M1147 418l3 -7M1065 502l6 -2M754 627l10 2M907 641l8 -1M860 486l5 8M1240 518l8 0M1012 592l10 1M1168 645l8 -2M918 611l4 -7M926 690l6 -7M1055 498l2 8M1125 523l6 5M1032 580l9 3" stroke="#e8b7b0" stroke-width="3.1" opacity=".82"/><path d="M902 180l6 -7M1039 360l9 -3M902 360l10 0M1029 443l9 -1M623 602l8 1M852 404l8 0M1175 28l7 5M650 53l5 -1M954 149l3 -6M1094 469l5 -8M1035 235l10 -3M1056 176l7 1M1118 357l8 -1M819 168l5 -0M772 592l8 2M672 184l7 1M930 560l4 -7M797 346l7 0M977 356l4 5M900 447l9 4M922 223l9 -2M789 194l7 -1M854 178l1 7M1183 528l8 2M728 469l7 -3M1120 249l3 -6M1229 307l10 2M1161 210l4 -4M603 263l7 7M935 327l8 2M908 284l6 2M1297 260l10 -2M1054 445l10 1M914 66l7 6M839 236l8 -2M1191 319l3 -7M993 119l5 2M1124 101l6 -1M657 241l5 -7M1200 237l9 -2M1036 105l5 1M1214 525l6 1M778 339l8 -1M1054 219l7 1M1321 510l2 10M852 35l9 1M850 594l6 -6M842 504l3 -10M1060 200l7 2M845 198l4 -4M988 299l5 -5M744 335l8 -7M987 458l5 6M759 678l8 -2M840 617l7 1M1118 531l6 -6M944 464l9 -1M1055 494l7 2M1069 607l4 -8M1053 574l9 0M901 584l8 -3M782 587l8 -2M972 513l1 8M1071 670l9 3M1274 594l9 1M1007 512l6 -6M1250 511l4 -5M872 466l8 -6M1211 515l9 -3M1059 428l8 -0M1006 484l6 -3" stroke="#d96a7a" stroke-width="3.1" opacity=".82"/><path d="M904 264l3 -8M634 274l1 7M833 430l7 -2M877 231l5 1M1126 466l2 -8M1171 153l2 6M1021 519l1 7M924 51l5 -4M1134 297l9 -2M1150 346l10 -2M868 314l2 -5M1007 509l7 -6M1040 104l5 9M875 455l8 3M1227 225l1 7M944 334l6 1M1028 136l8 -6M932 259l5 2M1028 441l5 4M976 257l6 -1M888 16l9 -2M767 568l5 3M852 486l7 2M997 495l6 -2M650 106l1 -5M938 437l10 1M920 269l9 -0M1055 348l3 4M1373 508l10 -1M1004 229l4 6M1321 37l4 -4M849 404l6 -2M813 315l3 -10M960 450l7 -1M800 147l8 -2M796 272l6 -0M894 278l6 0M1381 363l1 5M777 551l7 2M677 262l9 -5M959 151l2 -5M1135 446l1 6M1252 595l7 8M828 194l4 -5M1053 368l8 2M941 423l7 2M1122 310l6 1M877 567l7 3M872 279l6 -1M1008 447l8 2M991 402l2 -6M947 538l9 -2M734 669l7 1M1170 612l8 6M1051 668l9 1M912 553l5 -0M993 469l7 -1M1058 426l7 -6M597 470l7 0M1132 579l8 -1M628 543l7 -0M947 596l4 10M821 466l3 9M750 526l8 3M908 644l5 -2M941 560l5 -2M948 597l7 -2M1222 669l4 -5M909 580l6 -6M874 521l1 8" stroke="#8fd0c0" stroke-width="3.1" opacity=".82"/><path d="M1040 100l9 -2M1251 263l9 1M1174 564l6 -6M889 207l5 -2M810 544l6 0M1410 65l9 -0M1027 623l8 -2M909 312l6 -6M1133 684l10 -1M854 234l7 1M1202 347l6 -5M875 417l10 -0M1137 185l7 -1M982 372l5 0M936 184l8 -4M1271 410l5 -3M1104 328l10 1M1054 28l7 2M733 107l6 1M1154 350l3 -7M663 332l7 -2M1115 71l8 1M1122 590l4 -5M1108 237l10 3M802 369l7 -5M802 92l7 -1M970 434l4 4M1098 145l3 7M598 95l6 -0M1095 345l8 1M672 110l6 3M919 224l6 2M1144 178l2 5M956 6l6 4M754 497l2 -6M680 644l9 -3M1220 235l7 -7M1101 525l6 -0M1226 175l5 0M1105 28l9 2M1067 352l9 3M924 238l9 -1M1209 11l7 -2M1099 277l2 -5M1113 489l5 1M1174 400l3 4M1230 342l6 2M855 233l5 -1M842 229l5 6M753 213l8 2M1402 388l1 -10M937 275l6 -7M767 382l8 2M875 474l2 -5M689 420l2 -5M970 277l7 1M771 415l10 -0M952 625l6 1M1010 390l3 8M812 559l2 -5M852 236l5 1M965 536l9 3M1373 294l7 1M1045 281l10 3M613 247l5 1M1051 261l2 -6M927 286l6 1M1331 256l6 -5M659 214l7 -1M588 437l2 9M1054 28l10 0M1277 370l5 8M655 568l10 -1M968 563l7 2M775 175l7 3M887 258l7 1M956 350l4 4M796 423l10 0M649 306l7 1M935 421l10 -1M854 271l5 -9M939 524l6 -4M1077 678l6 -2M721 552l4 3M1023 595l8 -1M1280 452l9 -2M1074 452l6 3M1057 601l8 -4M974 532l7 3M736 507l8 -1M1025 540l10 2M991 576l1 6M702 509l7 1M881 621l5 1M945 433l8 4M828 630l7 2M706 417l4 3M1169 521l7 -3M766 431l7 0M879 533l3 7M655 492l9 -0M895 549l6 3M934 547l6 4M993 480l4 -6M1142 448l8 2M1001 576l4 7M1122 609l3 -5" stroke="#c9d4f0" stroke-width="3.1" opacity=".82"/><path d="M1170 577l5 1M781 529l9 0M845 589l8 3M1136 456l5 -8M1143 117l7 -2M954 160l9 -1M822 326l9 3M1220 58l5 -2M791 558l6 -1M1090 231l4 6M1100 434l4 -8M1018 507l8 -2M948 623l2 -8M991 591l5 -4M915 370l6 -8M796 356l3 10M957 255l10 2M890 454l2 -8M1150 398l2 7M948 530l5 7M1059 469l4 8M834 267l6 -2M855 457l10 1M1034 272l6 -1M653 291l9 2M786 324l6 7M825 678l4 3M1001 447l10 3M1184 38l6 5M760 328l7 -1M902 307l7 -1M987 112l10 -2M918 569l6 -1M825 164l6 -1M741 150l7 -1M1140 109l3 5M792 290l3 -6M903 401l8 3M671 11l6 -1M1034 467l8 2M1253 593l4 -5M1208 389l7 3M723 337l10 -1M1217 436l10 1M1194 268l7 1M980 391l8 2M785 179l7 -1M1048 96l3 8M958 635l7 5M972 233l7 -2M861 177l5 8M853 146l4 -7M1145 475l9 -1M868 58l5 -9M870 520l4 7M1113 593l10 3M1263 481l8 -6M1119 530l3 7M1018 514l10 1M803 462l5 6M1053 641l10 2M1102 480l7 -4M978 519l3 -9M831 634l5 -2M834 691l6 2M1053 597l10 -1M1012 443l6 -0M1068 614l1 9M1008 577l8 6M978 685l7 1M910 587l4 -8M919 606l8 0M1045 423l3 -5M1133 634l5 -2M966 575l5 1M1219 617l2 7M1149 518l8 1M1080 544l8 -2M1029 624l7 -1M1326 387l8 -2M1095 512l6 -1M1077 456l5 8M755 649l10 1" stroke="#e8c89a" stroke-width="3.1" opacity=".82"/><path d="M1104 75l9 2M826 479l5 -1M1081 92l6 -1M1175 10l7 1M963 356l6 -2M617 192l9 -5M1204 404l9 -1M839 184l8 3M986 651l10 0M639 476l7 0M1134 461l5 2M1311 586l6 3M1288 430l5 0M919 326l6 4M791 296l6 -6M706 387l6 -8M1219 481l7 -0M1013 440l9 3M905 455l6 1M1041 686l7 -2M750 380l9 -4M862 235l7 -2M764 509l3 5M745 312l5 6M932 470l9 1M790 512l10 1M1175 47l2 -5M1096 273l4 -4M831 481l6 7M1001 273l5 -0M923 334l9 1M787 232l6 -5M1360 110l7 -3M1231 475l3 -7M1214 408l8 -0M1003 350l8 -1M1121 149l8 4M757 368l8 1M1049 306l7 -2M1188 338l2 7M1047 317l4 5M1001 531l10 1M1360 513l5 6M788 245l7 1M1208 424l1 -9M915 34l8 1M995 297l6 2M1027 413l8 -2M796 356l8 1M788 385l9 -1M735 214l5 9M1401 348l9 -3M1104 352l5 -2M990 153l8 -2M731 592l4 -5M1109 179l3 6M957 147l5 -1M1100 587l3 -7M1043 460l6 1M1094 626l5 1M902 469l7 -0M1034 401l3 6M1020 518l10 3M815 597l9 3M998 528l5 6M1219 561l7 1M618 459l3 -6M815 522l2 6M884 588l8 6M1177 521l7 2M1144 635l7 1M876 520l5 1M837 557l8 -3M1336 667l4 5M959 440l10 1M824 692l7 2M953 581l8 -0M1061 582l9 4M1078 621l5 -4M1015 494l10 -1M1282 587l5 -1M1210 561l8 -2M609 475l10 2M1166 554l8 1" stroke="#20223a" stroke-width="3.1" opacity=".82"/><path d="M830 383l8 4M1032 149l6 -5M724 252l3 8M750 122l9 -0M1069 169l3 7M891 138l2 8M1085 687l7 -2M743 183l10 -1M744 526l3 8M1106 511l4 -3M843 120l5 -3M740 524l7 0M1081 436l7 2M1065 457l5 6M793 193l8 0M1111 310l6 -2M961 115l7 2M1046 491l9 -3M850 544l3 5M1158 163l8 1M827 227l5 -2M1054 415l7 -3M613 87l5 -2M678 278l7 -2M833 99l9 2M1110 521l8 -2M771 581l1 -7M940 493l10 2M671 383l6 0M857 293l5 2M996 367l8 -1M949 53l10 0M1102 202l5 0M1089 252l7 -1M729 487l6 4M1040 496l5 5M1065 185l9 2M1013 291l8 6M1111 75l5 -4M1213 498l5 -3M1224 111l6 -4M866 562l8 3M1264 603l3 6M964 552l5 2M997 449l3 4M1044 501l4 -4M771 644l5 0M753 581l8 2M896 548l5 4M996 631l10 2M901 518l10 -4M787 568l3 10M772 457l10 -2M1155 600l4 -5M1000 692l5 -4M923 660l9 -1M917 640l6 -2M966 525l6 4M893 586l5 -4M948 669l7 -1M1108 642l7 6M1014 507l5 5M855 691l7 -2M1111 592l8 0" stroke="#34344e" stroke-width="3.1" opacity=".82"/></g></g></defs></svg>
<div id="win"><div id="wi">
<div class="a" style="left:499px;top:281px;width:2842px;height:150px;background:#7a8393"></div>
<div class="a" style="left:517px;top:299px;width:82px;height:82px;border-radius:24px;background:#888a93"></div>
<svg style="left:517px;top:299px" width="82" height="82" viewBox="0 0 82 82"><path d="M30.5 36 L41 46 L51.5 36" fill="none" stroke="#2b2c30" stroke-width="5.2"/></svg>
<div class="chip" style="left:617px;width:153px;background:#66308f"></div>
<div class="t m" id="tMusica" style="left:634.3px;top:323.64px;font-size:33.5px;color:#a9a4ae;letter-spacing:1.9px;">Música</div>
<div class="ul" style="left:623px;width:141px;background:#66308f"></div>
<div class="chip" style="left:800px;width:145px;background:#9a7212"></div>
<div class="t m" id="tEscola" style="left:816.3px;top:323.64px;font-size:33.5px;color:#222326;letter-spacing:1.4px;">Escola</div>
<div class="ul" style="left:806px;width:133px;background:#9a7212"></div>
<div class="chip" style="left:975px;width:137px;background:#1f5197"></div>
<div class="t m" id="tSocial" style="left:992.9px;top:323.64px;font-size:33.5px;color:#a6abb5;letter-spacing:1.9px;">Social</div>
<div class="ul" style="left:981px;width:125px;background:#1f5197"></div>
<div class="a" style="left:499px;top:399px;width:2842px;height:116px;background:#929394;border-radius:14px 14px 0 0"></div>
<svg style="left:0;top:0" width="3840" height="420"><path d="M1123 399 A30 30 0 0 0 1153 369 L1153 327 A28 28 0 0 1 1181 299 L1774 299 A28 28 0 0 1 1802 327 L1802 369 A30 30 0 0 0 1832 399 Z" fill="#929394"/></svg>
<svg style="left:1180px;top:326px" width="42" height="29" viewBox="0 0 42 29"><rect width="42" height="29" rx="8" fill="#9a1014"/><path d="M16.5 8 L28 14.5 L16.5 21Z" fill="#a3a3a4"/></svg>
<div class="t m" id="tTab" style="left:1242px;top:322.82px;font-size:34px;color:#1e1f22;letter-spacing:1.3px;">YouTube</div>
<svg style="left:1738px;top:324px" width="32" height="32" viewBox="0 0 32 32"><path d="M5.5 5.5 L26.5 26.5 M26.5 5.5 L5.5 26.5" stroke="#222326" stroke-width="5" fill="none"/></svg>
<svg style="left:1850px;top:324px" width="32" height="32" viewBox="0 0 32 32"><path d="M16 2.5 V29.5 M2.5 16 H29.5" stroke="#303135" stroke-width="5" fill="none"/></svg>
<div class="a" style="left:3028px;top:337px;width:36px;height:6px;background:#1b4a93"></div>
<div class="a" style="left:3148px;top:321px;width:37px;height:37px;border:6px solid #1b4a93"></div>
<svg style="left:3262px;top:320px" width="40" height="40" viewBox="0 0 40 40"><path d="M4 4 L36 36 M36 4 L4 36" stroke="#1b4a93" stroke-width="6" fill="none"/></svg>
<svg style="left:533px;top:436px" width="40" height="40" viewBox="0 0 40 40"><path d="M36 19.7 H6 M19.5 5 L5 19.7 L19.5 34.4" stroke="#3b3c3f" stroke-width="3.4" fill="none"/></svg>
<svg style="left:621px;top:436px" width="40" height="40" viewBox="0 0 40 40"><path d="M4 19.7 H34 M20.5 5 L35 19.7 L20.5 34.4" stroke="#6d6e71" stroke-width="3.4" fill="none"/></svg>
<svg style="left:710px;top:436px" width="40" height="40" viewBox="0 0 40 40"><path d="M34.6 24.2 A15 15 0 1 1 31.6 10.2" stroke="#3b3c3f" stroke-width="3.4" fill="none"/><path d="M35.8 3.4 V14.3 H23.2" stroke="#3b3c3f" stroke-width="3.4" fill="none"/></svg>
<div class="a" style="left:795px;top:414px;width:2199px;height:83px;border-radius:42px;background:#8a8b90"></div>
<div class="a" style="left:806px;top:426px;width:59px;height:59px;border-radius:30px;background:#9496a0"></div>
<svg style="left:815px;top:437px" width="40" height="38" viewBox="0 0 40 38"><circle cx="10.5" cy="10.5" r="4.6" stroke="#2f3033" stroke-width="3" fill="none"/><path d="M21 10.5 H34.5" stroke="#2f3033" stroke-width="3"/><circle cx="30" cy="25.7" r="4.6" stroke="#2f3033" stroke-width="3" fill="none"/><path d="M6 25.7 H19.7" stroke="#2f3033" stroke-width="3"/></svg>
<div class="t" id="tUrl" style="left:886px;top:436.03px;font-size:36px;color:#393a3e;letter-spacing:-0.15px;"><span style="color:#1f2023">youtube.com</span>/watch/</div>
<svg style="left:2918.6px;top:436.2px" width="42" height="40.2" viewBox="0 0 46 44"><path d="M23 5.5 L28 18.2 L41.6 19.2 L31.1 27.9 L34.5 41.1 L23 33.8 L11.5 41.1 L14.9 27.9 L4.4 19.2 L18 18.2 Z" stroke="#3b3c3f" stroke-width="3.5" fill="none" stroke-linejoin="miter"/></svg>
<svg style="left:0;top:0" width="3840" height="600"><path d="M3041 450.2 V442.9 a2.5 2.5 0 0 1 2.5 -2.5 H3069.9 a2.5 2.5 0 0 1 2.5 2.5 V469.5 a2.5 2.5 0 0 1 -2.5 2.5 H3043.5 a2.5 2.5 0 0 1 -2.5 -2.5 V462.6 a6.2 6.2 0 0 0 0 -12.4" stroke="#3b3c3f" stroke-width="3.6" fill="none" stroke-linecap="round"/><path d="M3051.4 440.4 a5.6 5.6 0 0 1 11.2 0z M3072.4 450.5 a5.6 5.6 0 0 1 0 11.2z" fill="#3b3c3f" stroke="#3b3c3f" stroke-width="1"/></svg>
<svg style="left:3255px;top:431.3px;overflow:hidden;border-radius:25px" width="50" height="50" viewBox="0 0 50 50"><circle cx="25" cy="25" r="25" fill="#8b8c8e"/><rect x="0" y="18" width="16" height="20" fill="#97989a"/><rect x="36" y="10" width="14" height="26" fill="#98999b"/><path d="M3 50 C5 41 14 38 20 36.5 L25 47 L30.5 36.5 C37 38 45 41 47 50Z" fill="#a4a5a7"/><g transform="translate(25.2 21) scale(1.13) translate(-25.2 -22.3)"><path d="M21.3 28 h7.6 l1.2 8.5 l-5 10 l-5 -10z" fill="#46322b"/><ellipse cx="25.2" cy="22.3" rx="7.7" ry="9.6" fill="#4a352e"/><path d="M16.6 21 C15 9 22 6.5 26 6.8 C32 6.5 36 11 33.8 21 C33 15 30 12.5 25 12.8 C20 12.5 17.6 15 16.6 21Z" fill="#262424"/><path d="M22 27.2 q3.2 2 6.4 0" stroke="#8a7c78" stroke-width="1.3" fill="none"/></g></svg>
<div class="a" style="left:499px;top:512px;width:2842px;height:2px;background:#88898b"></div>
<div class="a" style="left:545px;top:546px;width:31px;height:2px;background:#1e1f21"></div>
<div class="a" style="left:545px;top:556.2px;width:31px;height:2px;background:#1e1f21"></div>
<div class="a" style="left:545px;top:566.2px;width:31px;height:2px;background:#1e1f21"></div>
<svg style="left:622px;top:541px" width="48" height="34" viewBox="0 0 48 34"><rect width="48" height="34" rx="9" fill="#9a1014"/><path d="M19 9.5 L32 17 L19 24.5Z" fill="#a3a3a4"/></svg>
<div class="t" id="tLogo" style="left:676px;top:539.2px;font-size:39px;font-weight:bold;color:#202124;-webkit-text-stroke:.5px #202124;transform-origin:0 0;transform:scaleX(0.651);letter-spacing:-1.5px">YouTube</div>
<div class="a" style="left:1431px;top:524px;width:1023px;height:68px;border-radius:34px;border:2px solid #808184;background:#929394;overflow:hidden"><div class="a" style="left:913px;top:-2px;width:110px;height:68px;background:#8b8c8d;border-left:2px solid #808184"></div></div>
<div class="t" id="tCerca" style="left:1458.3px;top:543.54px;font-size:27px;color:#5e5f63;letter-spacing:0.35px;">Cerca</div>
<svg style="left:2380px;top:538px" width="40" height="40" viewBox="0 0 40 40"><circle cx="18.7" cy="18.3" r="13" stroke="#1b1c1e" stroke-width="2.4" fill="none"/><path d="M28 27.5 L35.5 35" stroke="#1b1c1e" stroke-width="2.4"/></svg>
<div class="a" style="left:2483px;top:524px;width:66px;height:66px;border-radius:33px;background:#8d8e8f"></div>
<svg style="left:2496px;top:536px" width="40" height="44" viewBox="0 0 40 44"><rect x="15.5" y="6" width="9.5" height="22" rx="4.7" fill="#202124"/><path d="M10 22 a10.2 10.2 0 0 0 20.4 0 M20.2 32 V39" stroke="#202124" stroke-width="2.4" fill="none"/></svg>
<div class="a" id="video" style="left:615px;top:640px;width:1995px;height:1130px;border-radius:22px;overflow:hidden;background:#14121f">
<svg style="left:0px;top:0px;overflow:hidden" width="1995" height="1130" viewBox="0 0 1995 1130"><use href="#scene"/></svg><div class="a" style="left:0px;top:0px;width:1995px;height:1130px;background:rgba(32,33,36,.49)"></div>
</div>
<div class="a" style="left:651px;top:1602px;width:911px;height:121px;border-radius:61px;background:#202124"></div>
<svg style="left:719.5px;top:1642.5px" width="51" height="41.5" viewBox="0 0 54 44"><path d="M2 9 V6.5 a4.5 4.5 0 0 1 4.5 -4.5 H47.5 a4.5 4.5 0 0 1 4.5 4.5 V37.5 a4.5 4.5 0 0 1 -4.5 4.5 H32" stroke="#fff" stroke-width="4" fill="none"/><path d="M2 18 a24 24 0 0 1 24 24 M2 26.5 a15.5 15.5 0 0 1 15.5 15.5" stroke="#fff" stroke-width="4" fill="none"/><path d="M2 35 a7 7 0 0 1 7 7 H2Z" fill="#fff"/></svg>
<div class="t" id="tCast" style="left:804px;top:1644.18px;font-size:37px;color:#f1f1f1;">S'està reproduint a Televisor del menjador</div>
<div class="t" id="tTitle" style="left:617px;top:1793.02px;font-size:42.5px;color:#292a2d;letter-spacing:-0.49px;">Concert en directe - Palm Springs</div>
<div class="sk" style="left:2648px;top:880px;width:287px;height:165px"></div>
<div class="sk" style="left:2648px;top:1063px;width:287px;height:165px"></div>
<div class="sk" style="left:2648px;top:1243px;width:287px;height:165px"></div>
<div class="sk" style="left:2648px;top:1422px;width:287px;height:170px"></div>
<div class="sk" style="left:2648px;top:1601px;width:287px;height:165px"></div>
<div class="sk" style="left:2648px;top:1777px;width:287px;height:165px"></div>
<div class="sp" style="left:2943px;top:1068px;width:287px;height:31px"></div>
<div class="sp" style="left:2943px;top:1103px;width:342px;height:33px"></div>
<div class="sp" style="left:2943px;top:1142px;width:152px;height:25px"></div>
<div class="sp" style="left:2943px;top:1173px;width:229px;height:26px"></div>
<div class="sp" style="left:2943px;top:1243px;width:287px;height:31px"></div>
<div class="sp" style="left:2943px;top:1280px;width:342px;height:32px"></div>
<div class="sp" style="left:2943px;top:1322px;width:152px;height:25px"></div>
<div class="sp" style="left:2943px;top:1355px;width:251px;height:25px"></div>
<div class="sp" style="left:2943px;top:1432px;width:287px;height:31px"></div>
<div class="sp" style="left:2943px;top:1470px;width:208px;height:26px"></div>
<div class="sp" style="left:2943px;top:1606px;width:355px;height:32px"></div>
<div class="sp" style="left:2943px;top:1644px;width:307px;height:32px"></div>
<div class="sp" style="left:2943px;top:1683px;width:152px;height:25px"></div>
<div class="sp" style="left:2943px;top:1714px;width:334px;height:25px"></div>
<div class="sp" style="left:2943px;top:1778px;width:334px;height:31px"></div>
<div class="sp" style="left:2943px;top:1815px;width:307px;height:32px"></div>
<div class="sp" style="left:2943px;top:1854px;width:152px;height:36px"></div>
</div></div>
<div class="a" style="left:3115.7px;top:398.7px;width:114.6px;height:114.6px;border-radius:58px;background:#e8eaed;box-shadow:8px 14px 26px rgba(0,0,0,.17)"></div>
<svg style="left:3140px;top:436px" width="64" height="48" viewBox="0 0 64 48"><path d="M6 5.4 H40 V11.3 H6Z M6 17 H40 V22.3 H6Z M6 27.8 H28.6 V33.2 H6Z" fill="#000"/><path d="M46 5.4 H60 V11.2 H52.1 V36.2 H46Z" fill="#000"/><circle cx="43.3" cy="36.1" r="8.8" fill="#000"/></svg>
<div class="a" id="popup" style="left:2508px;top:557px;width:801px;height:471.5px;border-radius:18px;background:#fff;box-shadow:10px 18px 34px rgba(0,0,0,.28),3px 5px 10px rgba(0,0,0,.14);overflow:hidden;will-change:transform">
<div class="a" style="left:0;top:0;width:801px;height:265px;background:#05070f;overflow:hidden">
<div class="a" style="left:335px;top:-19.6px;width:569.4px;height:322.5px;overflow:hidden"><svg style="left:0px;top:0px;overflow:hidden" width="569.4" height="322.5" viewBox="0 0 1995 1130"><use href="#scene"/></svg></div>
<div class="a" style="left:330px;top:0;width:130px;height:265px;background:linear-gradient(90deg,#05070f 0,#05070f 78%,rgba(5,7,15,0) 100%)"></div>
</div>
<div class="a" style="left:41px;top:39px;width:57px;height:16px;border-radius:8px;background:#cfd6fb"></div>
<div class="a" style="left:41px;top:88.3px;width:256.5px;height:15.6px;border-radius:8px;background:#cfd6fb"></div>
<div class="a" style="left:41px;top:115.5px;width:133.5px;height:17.3px;border-radius:9px;background:#cfd6fb"></div>
<svg style="left:0;top:0" width="801" height="265" viewBox="2508 557 801 265"><g fill="#cdd3fa" stroke="#cdd3fa" stroke-width="3" stroke-linejoin="round"><path d="M2558.5 760.8 L2572.7 750.6 V771 Z M2578.7 760.8 L2593.2 750.6 V771 Z"/><path d="M2646.5 748.4 L2668.3 760.8 L2646.5 773.2 Z"/><path d="M2717 750.6 L2731.6 760.8 L2717 771 Z M2737.5 750.6 L2751.7 760.8 L2737.5 771 Z"/></g><path d="M2786.3 737.4 V784" stroke="#cdd3fa" stroke-width="3.5" stroke-linecap="round"/><g stroke="#cdd3fa" stroke-width="3.4" fill="none"><path d="M2835.4 741.3 H2859.3 V762.5 M2817.7 759.8 V774.1 H2838.2 M2815.8 740.6 L2829.2 753.6 M2816 753.6 H2829.2 V745"/></g><rect x="2841.3" y="762.9" width="19.7" height="12.9" fill="#cdd3fa"/></svg>
<svg style="left:0;top:265px" width="801" height="207" viewBox="2508 822 801 207"><rect x="2557.6" y="858.4" width="40.6" height="31.4" rx="2.5" stroke="#000" stroke-width="4" fill="none"/><path d="M2564.4 873.1 H2568.3 M2571.4 873.1 H2591.3 M2564.4 879.9 H2584.6 M2587.7 879.9 H2591.3" stroke="#000" stroke-width="3.2"/><rect x="3217" y="863.4" width="44.6" height="22.2" rx="11.1" stroke="#000" stroke-width="4.7" fill="none"/><circle cx="3228.2" cy="874.6" r="7" fill="#000"/><path d="M2508 926.6 H3309" stroke="#7a86bd" stroke-width="1.2"/><path d="M2573.6 963.3 L2574.0 957.6 L2581.8 957.6 L2582.2 963.3 L2588.0 966.7 L2593.2 964.2 L2597.1 970.9 L2592.3 974.2 L2592.3 980.8 L2597.1 984.1 L2593.2 990.8 L2588.0 988.3 L2582.2 991.7 L2581.8 997.4 L2574.0 997.4 L2573.6 991.7 L2567.8 988.3 L2562.6 990.8 L2558.7 984.1 L2563.5 980.8 L2563.5 974.2 L2558.7 970.9 L2562.6 964.2 L2567.8 966.7Z" stroke="#000" stroke-width="4" fill="none" stroke-linejoin="miter"/><circle cx="2577.9" cy="977.5" r="7.4" fill="#000"/><path d="M3253.2 959.6 H3236 V996 H3272.8 V979 M3256.6 959.6 H3272.8 V976 M3247.3 984.5 L3272 960.4" stroke="#000" stroke-width="3.9" fill="none"/></svg>
<div class="t" id="tRow1" style="left:122.90000000000009px;top:299.37px;font-size:34.3px;color:#1f1f1f;letter-spacing:0.17px;">Subtítols instantanis</div>
<div class="t" id="tRow2" style="left:123px;top:403.27px;font-size:34.3px;color:#1f1f1f;letter-spacing:0.33px;">Configuració dels subtítols</div>
</div>
</body></html>
